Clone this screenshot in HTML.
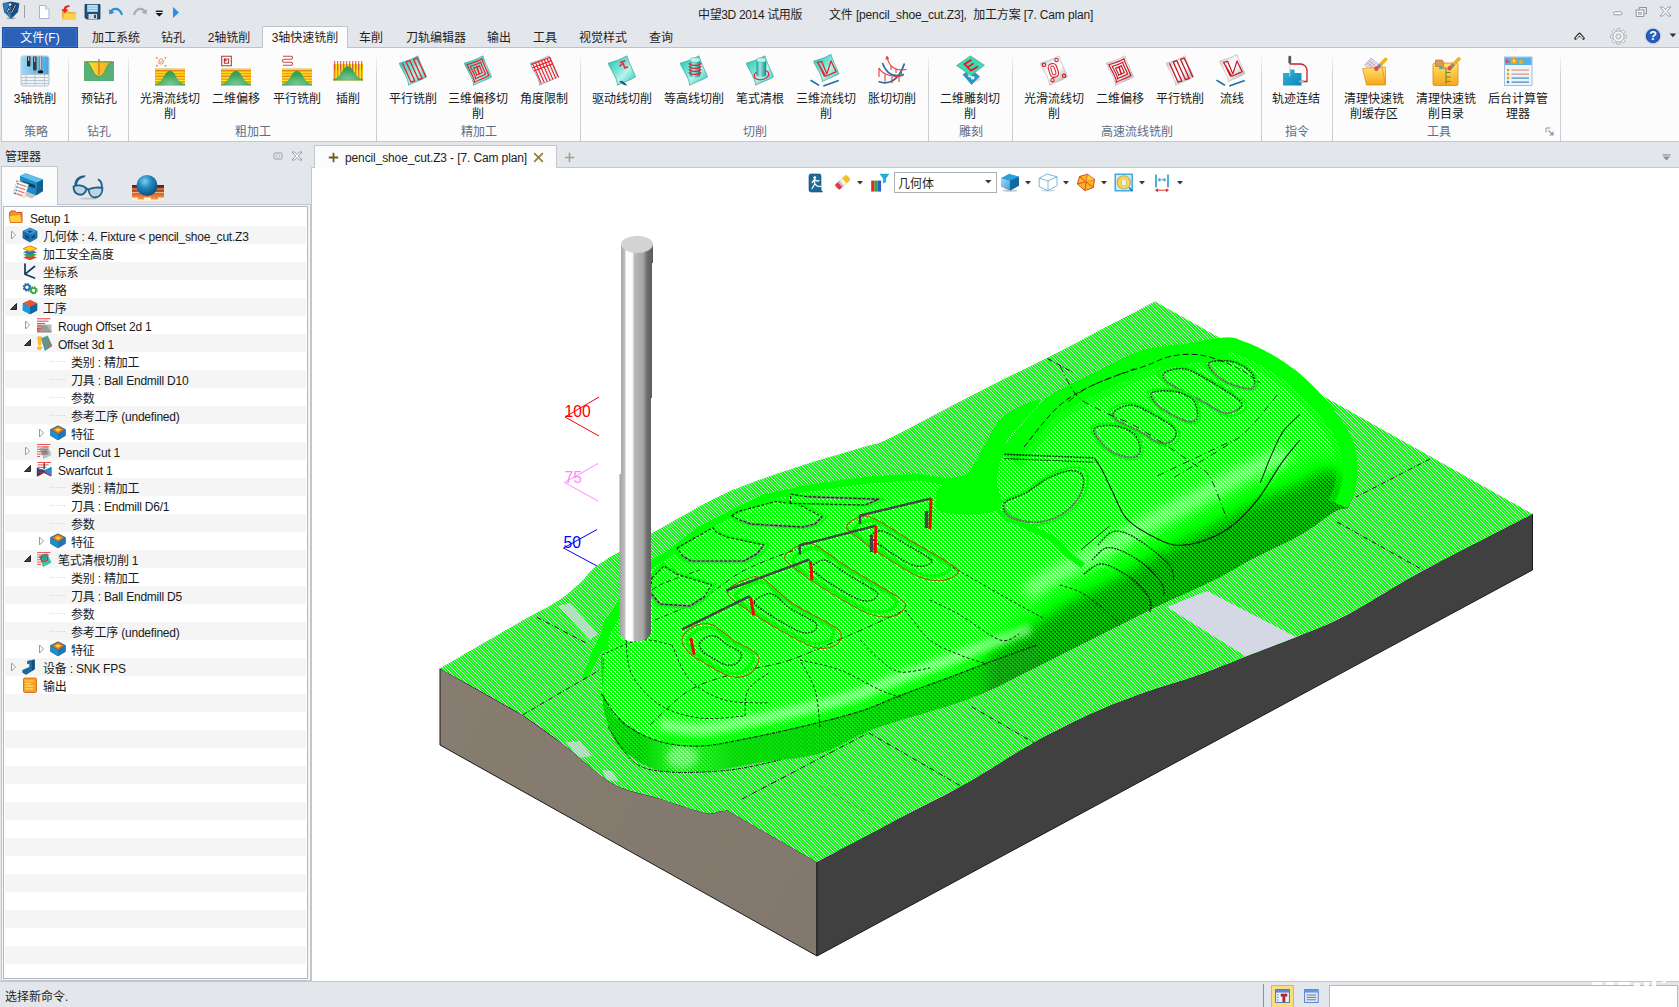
<!DOCTYPE html>
<html lang="zh-CN"><head><meta charset="utf-8"><title>中望3D 2014 试用版</title>
<style>
*{box-sizing:border-box;margin:0;padding:0}
html,body{width:1679px;height:1007px;overflow:hidden;background:#e3e6ea}
body{font-family:"Liberation Sans","Noto Sans CJK SC",sans-serif;font-size:12px;color:#1e1e1e;position:relative}
.a{position:absolute;white-space:nowrap}
.c{position:absolute;white-space:nowrap;text-align:center;transform:translateX(-50%)}
svg{position:absolute;overflow:visible}
.t{font-size:12px;line-height:16px;height:16px}
.lbl{font-size:12px;line-height:15px;color:#1a1a1a}
.grp{font-size:12px;line-height:15px;color:#5f6d84}
.sep{position:absolute;width:1px;top:54px;height:87px;background:linear-gradient(#fcfcfd,#cfd3d9 25%,#c9cdd4)}
.row{position:absolute;left:5px;width:301px;height:18px}
.row.alt{background:#f5f5f5}
.tx{position:absolute;white-space:nowrap;font-size:12px;line-height:18px;height:18px;color:#1a1a1a;margin-top:2px;letter-spacing:-.22px}
</style></head>
<body>
<div class="a" style="left:0;top:0;width:1679px;height:48px;background:#e3e6ea"></div>
<svg style="left:2px;top:1px" width="18" height="18" viewBox="0 0 18 18"><path d="M1 2.5 L9 1 L17 2.5 L15.5 11 L9 17.5 L2.5 11Z" fill="#2a7fc4" stroke="#1a4f86" stroke-width=".8"/><path d="M9 1 L17 2.5 L15.5 11 L9 17.5Z" fill="#174f8a"/><path d="M4 11.5 L6.5 6.5 L9.5 10.5 L13 3.5 L14.2 4.2 L10 12.5 L7 8.8 L5.2 12.2Z" fill="#fff" stroke="#111" stroke-width=".7"/><circle cx="8" cy="3.6" r="1.7" fill="#fff" stroke="#111" stroke-width=".6"/><ellipse cx="9" cy="17.3" rx="4.5" ry=".9" fill="#555" opacity=".45"/></svg>
<div class="a" style="left:24px;top:5px;width:1px;height:13px;background:#9aa0a8"></div>
<svg style="left:38px;top:4px" width="12" height="16" viewBox="0 0 12 16"><path d="M1.5 1.5 h6 l3.5 3.5 v9.5 h-9.5Z" fill="#fff" stroke="#a9b7c6" stroke-width="1"/><path d="M7.5 1.5 v3.5 h3.5" fill="#e8eef4" stroke="#a9b7c6" stroke-width=".8"/></svg>
<svg style="left:60px;top:4px" width="17" height="16" viewBox="0 0 17 16"><path d="M2.5 7 h5 l1.5 1.5 h6.5 v6.5 h-13Z" fill="#f7b21e" stroke="#e09410" stroke-width=".6"/><path d="M2.5 15 L4.5 9.5 h12 L15.5 15Z" fill="#ffd24a"/><path d="M9.5 1.2 C5.5 1 3.6 3 3.6 5.2 L1.2 5.2 L4.8 9 L8.4 5.2 L6 5.2 C6.2 3.8 7.4 2.8 9.5 3Z" fill="#e8241c"/></svg>
<svg style="left:84px;top:3px" width="17" height="17" viewBox="0 0 17 17"><path d="M1 1.5 h15 v14.5 h-13.5 l-1.5 -1.5Z" fill="#1d4f82" stroke="#12365c" stroke-width=".8"/><rect x="3.2" y="1.8" width="10.6" height="7" fill="#bfe1f6"/><rect x="3.2" y="3.6" width="10.6" height="1" fill="#8cc4e8"/><rect x="3.2" y="6" width="10.6" height="1" fill="#8cc4e8"/><rect x="4.5" y="11" width="8.5" height="5" fill="#d9d9d9"/><rect x="10" y="11.8" width="2" height="3.4" fill="#1d4f82"/></svg>
<svg style="left:108px;top:6px" width="16" height="11" viewBox="0 0 16 11"><path d="M2.5 6.2 C5 1.5 11 1.5 13.8 8.2" fill="none" stroke="#2f8fd0" stroke-width="2.2" stroke-linecap="round"/><path d="M.8 3.2 L1.6 8.6 L6.6 6.6Z" fill="#2f8fd0"/></svg>
<svg style="left:132px;top:6px" width="16" height="11" viewBox="0 0 16 11"><path d="M13.5 6.2 C11 1.5 5 1.5 2.2 8.2" fill="none" stroke="#a9adb3" stroke-width="2.2" stroke-linecap="round"/><path d="M15.2 3.2 L14.4 8.6 L9.4 6.6Z" fill="#a9adb3"/></svg>
<svg style="left:155px;top:10px" width="9" height="7" viewBox="0 0 9 7"><rect x=".8" y=".6" width="7" height="1.3" fill="#111"/><path d="M.6 3 h7.4 L4.3 6.6Z" fill="#111"/></svg>
<svg style="left:172px;top:6px" width="8" height="13" viewBox="0 0 8 13"><path d="M1 1 L7 6.5 L1 12Z" fill="#2f8fe6"/></svg>
<svg style="left:1613px;top:11px" width="10" height="5" viewBox="0 0 10 5"><rect x=".8" y=".8" width="8" height="3" rx="1" fill="#fff" stroke="#8d939b" stroke-width=".9"/></svg>
<svg style="left:1635px;top:6px" width="13" height="12" viewBox="0 0 13 12"><path d="M4.2 1.5 h7.3 v6.3 h-2.2 M4.2 1.5 v2.4" fill="none" stroke="#8d939b" stroke-width="1"/><rect x="1.2" y="4" width="7.6" height="6.4" fill="#fff" stroke="#8d939b" stroke-width="1"/><rect x="3.4" y="6.3" width="3.2" height="2" fill="#e3e6ea" stroke="#8d939b" stroke-width=".7"/></svg>
<svg style="left:1659px;top:6px" width="13" height="11" viewBox="0 0 13 11"><path d="M1 1 h2.8 l2.7 2.8 l2.7 -2.8 h2.8 l-4 4.4 l4 4.6 h-2.8 l-2.7 -3 l-2.7 3 h-2.8 l4 -4.6Z" fill="#fff" stroke="#8d939b" stroke-width=".9" stroke-linejoin="round"/></svg>
<svg style="left:1574px;top:31px" width="11" height="10" viewBox="0 0 11 10"><path d="M1.6 7.4 L5.5 3 L9.4 7.4" fill="none" stroke="#2a2a2a" stroke-width="2.8" stroke-linejoin="round" stroke-linecap="round"/><path d="M2.2 7.2 L5.5 3.6 L8.8 7.2" fill="none" stroke="#fff" stroke-width="1.2" stroke-linejoin="round" stroke-linecap="round"/></svg>
<svg style="left:1610px;top:28px" width="17" height="17" viewBox="0 0 17 17"><g transform="translate(8.5 8.5)"><rect x="-1.5" y="-8" width="3" height="3.2" rx=".6" fill="#f4f4f4" stroke="#9aa0a6" stroke-width=".7" transform="rotate(0)"/><rect x="-1.5" y="-8" width="3" height="3.2" rx=".6" fill="#f4f4f4" stroke="#9aa0a6" stroke-width=".7" transform="rotate(45)"/><rect x="-1.5" y="-8" width="3" height="3.2" rx=".6" fill="#f4f4f4" stroke="#9aa0a6" stroke-width=".7" transform="rotate(90)"/><rect x="-1.5" y="-8" width="3" height="3.2" rx=".6" fill="#f4f4f4" stroke="#9aa0a6" stroke-width=".7" transform="rotate(135)"/><rect x="-1.5" y="-8" width="3" height="3.2" rx=".6" fill="#f4f4f4" stroke="#9aa0a6" stroke-width=".7" transform="rotate(180)"/><rect x="-1.5" y="-8" width="3" height="3.2" rx=".6" fill="#f4f4f4" stroke="#9aa0a6" stroke-width=".7" transform="rotate(225)"/><rect x="-1.5" y="-8" width="3" height="3.2" rx=".6" fill="#f4f4f4" stroke="#9aa0a6" stroke-width=".7" transform="rotate(270)"/><rect x="-1.5" y="-8" width="3" height="3.2" rx=".6" fill="#f4f4f4" stroke="#9aa0a6" stroke-width=".7" transform="rotate(315)"/><circle r="5.6" fill="#f4f4f4" stroke="#9aa0a6" stroke-width=".8"/><circle r="2.6" fill="#e3e6ea" stroke="#9aa0a6" stroke-width=".8"/></g></svg>
<svg style="left:1644px;top:27px" width="18" height="18" viewBox="0 0 18 18"><circle cx="9" cy="9" r="7.8" fill="#2a5fc0" stroke="#c9d4e6" stroke-width="1.2"/><circle cx="9" cy="9" r="6.6" fill="none" stroke="#163f92" stroke-width=".6"/><text x="9" y="13.3" text-anchor="middle" font-family="Liberation Sans,sans-serif" font-weight="bold" font-size="12.5" fill="#fff">?</text></svg>
<svg style="left:1669px;top:33px" width="8" height="5" viewBox="0 0 8 5"><path d="M.6 .6 h6.6 L3.9 4.2Z" fill="#333"/></svg>
<div class="a t" style="left:698px;top:7px;letter-spacing:-.35px">中望3D 2014 试用版</div>
<div class="a t" style="left:829px;top:7px;letter-spacing:-.15px">文件 [pencil_shoe_cut.Z3],&nbsp; 加工方案 [7. Cam plan]</div>
<div class="a" style="left:1px;top:47px;width:1678px;height:95px;background:#fcfcfd;border-top:1px solid #bfc3c9;border-bottom:1px solid #c3c7cd;border-left:1px solid #c3c7cd"></div>
<div class="a" style="left:2px;top:27px;width:76px;height:21px;background:#2b61b7;border:1px solid #1c4ea5;box-shadow:inset 0 0 0 1px #3b72c9"></div>
<div class="c t" style="left:40px;top:30px;color:#fff">文件(F)</div>
<div class="a" style="left:262px;top:26px;width:86px;height:22px;background:#fcfcfd;border:1px solid #bfc3c9;border-bottom:none;border-radius:2px 2px 0 0"></div>
<div class="c t" style="left:116px;top:30px">加工系统</div>
<div class="c t" style="left:173px;top:30px">钻孔</div>
<div class="c t" style="left:229px;top:30px">2轴铣削</div>
<div class="c t" style="left:305px;top:30px">3轴快速铣削</div>
<div class="c t" style="left:371px;top:30px">车削</div>
<div class="c t" style="left:436px;top:30px">刀轨编辑器</div>
<div class="c t" style="left:499px;top:30px">输出</div>
<div class="c t" style="left:545px;top:30px">工具</div>
<div class="c t" style="left:603px;top:30px">视觉样式</div>
<div class="c t" style="left:661px;top:30px">查询</div>
<svg style="left:19px;top:55px" width="32" height="32" viewBox="0 0 32 32"><rect x="2" y="1" width="28" height="30" rx="2.5" fill="#eef3f6" stroke="#9fb4c2" stroke-width=".8"/><path d="M2.4 3.5 A2.5 2.5 0 0 1 4.5 1.4 L27.5 1.4 A2.5 2.5 0 0 1 29.6 3.5 L29.6 19 L2.4 19Z" fill="url(#gBlueTop)"/><rect x="2.4" y="19" width="27.2" height="1" fill="#b7c6cf"/><rect x="2.4" y="22" width="27.2" height="1" fill="#b7c6cf"/><rect x="2.4" y="25" width="27.2" height="1" fill="#b7c6cf"/><rect x="2.4" y="28" width="27.2" height="1" fill="#b7c6cf"/><rect x="6.5" y="19" width="1" height="11.5" fill="#b7c6cf"/><rect x="15.5" y="19" width="1" height="11.5" fill="#b7c6cf"/><rect x="25" y="19" width="1" height="11.5" fill="#b7c6cf"/><rect x="8" y="1.4" width="3.4" height="10" fill="#2b2b2b"/><rect x="9" y="2" width="1.2" height="4" fill="#bbb"/><path d="M14 1.4 h3.6 v12.5 a1.8 1.8 0 0 1 -3.6 0Z" fill="#3a3a3a"/><rect x="15" y="2" width="1.3" height="5" fill="#aaa"/><rect x="20.3" y="1.4" width="2.4" height="14" fill="#777"/><rect x="20.9" y="1.4" width="1" height="13" fill="#d5d5d5"/><ellipse cx="21.5" cy="16.8" rx="2.8" ry="1.5" fill="#111"/></svg>
<div class="c lbl" style="left:35px;top:92px">3轴铣削</div>
<svg style="left:83px;top:55px" width="32" height="32" viewBox="0 0 32 32"><rect x="1" y="6.5" width="30" height="19.5" fill="#57b074"/><rect x="1" y="6.5" width="30" height="1" fill="#7f9a50"/><path d="M3.5 7 C9 8.5 9.5 21.5 16 21.5 C22.5 21.5 23 8.5 28.5 7Z" fill="url(#gYellowV)" stroke="#3a9a55" stroke-width=".8"/><rect x="15.2" y="4" width="1.5" height="16" fill="#e07a30"/></svg>
<div class="c lbl" style="left:99px;top:92px">预钻孔</div>
<svg style="left:154px;top:55px" width="32" height="32" viewBox="0 0 32 32"><rect x="1" y="13.5" width="30" height="17" fill="#ffe818"/><rect x="1" y="15" width="30" height="1.5" fill="#e8841a"/><rect x="1" y="17.8" width="30" height="1.5" fill="#f0a020"/><rect x="1" y="20.6" width="30" height="1.5" fill="#e8841a"/><rect x="1" y="23.4" width="30" height="1.5" fill="#f0a020"/><rect x="1" y="26.2" width="30" height="1.5" fill="#e8841a"/><rect x="1" y="13.5" width="30" height="1" fill="#c9c2b0"/><path d="M1 30.5 L1 28.9 C9.4 28.7 10 15.7 16 15.7 C22 15.7 22.6 28.7 31 28.9 L31 30.5Z" fill="url(#gHillR)"/><path d="M7 6.5 m-2.6 0 a2.6 2.6 0 1 0 2.6 -2.6 a1.6 1.6 0 1 0 1.4 1.9" fill="none" stroke="#f08a5a" stroke-width="1"/><path d="M2 2.5 l1.6 .8 M12.2 2.5 l-1.6 .8 M2 11.2 l1.6 -.8 M12.2 11.2 l-1.6 -.8" stroke="#ee6a3a" stroke-width="1.3" fill="none"/></svg>
<div class="c lbl" style="left:170px;top:92px">光滑流线切</div>
<div class="c lbl" style="left:170px;top:107px">削</div>
<svg style="left:220px;top:55px" width="32" height="32" viewBox="0 0 32 32"><rect x="1" y="13.5" width="30" height="17" fill="#ffe818"/><rect x="1" y="15" width="30" height="1.5" fill="#e8841a"/><rect x="1" y="17.8" width="30" height="1.5" fill="#f0a020"/><rect x="1" y="20.6" width="30" height="1.5" fill="#e8841a"/><rect x="1" y="23.4" width="30" height="1.5" fill="#f0a020"/><rect x="1" y="26.2" width="30" height="1.5" fill="#e8841a"/><rect x="1" y="13.5" width="30" height="1" fill="#c9c2b0"/><path d="M1 30.5 L1 28.9 C9.4 28.7 10 15.7 16 15.7 C22 15.7 22.6 28.7 31 28.9 L31 30.5Z" fill="url(#gHillR)"/><path d="M1.7 1.2 h9.6 v9.6 h-9.6Z M4.4 4 h4.2 v4.2 h-4.2 z" fill="none" stroke="#b23a3a" stroke-width="1.1"/><path d="M4 3.8 l2.4 2.4" stroke="#8a1f1f" stroke-width="1.2"/></svg>
<div class="c lbl" style="left:236px;top:92px">二维偏移</div>
<svg style="left:281px;top:55px" width="32" height="32" viewBox="0 0 32 32"><rect x="1" y="13.5" width="30" height="17" fill="#ffe818"/><rect x="1" y="15" width="30" height="1.5" fill="#e8841a"/><rect x="1" y="17.8" width="30" height="1.5" fill="#f0a020"/><rect x="1" y="20.6" width="30" height="1.5" fill="#e8841a"/><rect x="1" y="23.4" width="30" height="1.5" fill="#f0a020"/><rect x="1" y="26.2" width="30" height="1.5" fill="#e8841a"/><rect x="1" y="13.5" width="30" height="1" fill="#c9c2b0"/><path d="M1 30.5 L1 28.9 C9.4 28.7 10 15.7 16 15.7 C22 15.7 22.6 28.7 31 28.9 L31 30.5Z" fill="url(#gHillR)"/><path d="M2 1.3 h8 a1.3 1.3 0 0 1 0 3 h-7 a1.3 1.3 0 0 0 0 3 h7 a1.3 1.3 0 0 1 0 3 h-8" fill="none" stroke="#c24e4e" stroke-width="1.1"/></svg>
<div class="c lbl" style="left:297px;top:92px">平行铣削</div>
<svg style="left:332px;top:55px" width="32" height="32" viewBox="0 0 32 32"><rect x="1" y="9" width="30" height="16.5" fill="#ffe818"/><rect x="2" y="9" width="1.4" height="16.5" fill="#e8841a"/><rect x="2.2" y="6" width="1" height="9.075" fill="#d05050"/><rect x="5" y="9" width="1.4" height="16.5" fill="#e8841a"/><rect x="5.2" y="6" width="1" height="9.075" fill="#d05050"/><rect x="8" y="9" width="1.4" height="16.5" fill="#e8841a"/><rect x="8.2" y="6" width="1" height="9.075" fill="#d05050"/><rect x="11" y="9" width="1.4" height="16.5" fill="#e8841a"/><rect x="11.2" y="6" width="1" height="9.075" fill="#d05050"/><rect x="14" y="9" width="1.4" height="16.5" fill="#e8841a"/><rect x="14.2" y="6" width="1" height="9.075" fill="#d05050"/><rect x="17" y="9" width="1.4" height="16.5" fill="#e8841a"/><rect x="17.2" y="6" width="1" height="9.075" fill="#d05050"/><rect x="20" y="9" width="1.4" height="16.5" fill="#e8841a"/><rect x="20.2" y="6" width="1" height="9.075" fill="#d05050"/><rect x="23" y="9" width="1.4" height="16.5" fill="#e8841a"/><rect x="23.2" y="6" width="1" height="9.075" fill="#d05050"/><rect x="26" y="9" width="1.4" height="16.5" fill="#e8841a"/><rect x="26.2" y="6" width="1" height="9.075" fill="#d05050"/><rect x="29" y="9" width="1.4" height="16.5" fill="#e8841a"/><rect x="29.2" y="6" width="1" height="9.075" fill="#d05050"/><path d="M1 25.5 L1 23.9 C9.4 23.7 10 11.2 16 11.2 C22 11.2 22.6 23.7 31 23.9 L31 25.5Z" fill="url(#gHillR)"/></svg>
<div class="c lbl" style="left:348px;top:92px">插削</div>
<svg style="left:397px;top:55px" width="32" height="32" viewBox="0 0 32 32"><path d="M2.3 8.2 C8 6.5 15 4.5 20.9 0.8 C22 6 27 15 29.5 21.8 C24 25.5 17 27 11.6 30.2 C11.5 23 4 14 2.3 8.2Z" fill="url(#gTeal)" stroke="#2ba596" stroke-width=".7"/><path d="M5.5 8.2 L14.1 27.2 L17.8 25.95 L9.2 6.95 L12.9 5.7 L21.5 24.7 L25.2 23.45 L16.6 4.45 L20.3 3.2 L28.9 22.2 " fill="none" stroke="#e8202a" stroke-width="1.3" stroke-linejoin="round"/></svg>
<div class="c lbl" style="left:413px;top:92px">平行铣削</div>
<svg style="left:462px;top:55px" width="32" height="32" viewBox="0 0 32 32"><path d="M2.3 8.2 C8 6.5 15 4.5 20.9 0.8 C22 6 27 15 29.5 21.8 C24 25.5 17 27 11.6 30.2 C11.5 23 4 14 2.3 8.2Z" fill="url(#gTeal)" stroke="#2ba596" stroke-width=".7"/><path d="M2.3 8.2 C8 6.5 15 4.5 20.9 0.8 C22 6 27 15 29.5 21.8 C24 25.5 17 27 11.6 30.2 C11.5 23 4 14 2.3 8.2Z" fill="none" stroke="#e8202a" stroke-width="1.2" transform="translate(16 15.5) scale(0.8) translate(-16 -15.5)" vector-effect="non-scaling-stroke"/><path d="M2.3 8.2 C8 6.5 15 4.5 20.9 0.8 C22 6 27 15 29.5 21.8 C24 25.5 17 27 11.6 30.2 C11.5 23 4 14 2.3 8.2Z" fill="none" stroke="#e8202a" stroke-width="1.2" transform="translate(16 15.5) scale(0.56) translate(-16 -15.5)" vector-effect="non-scaling-stroke"/><path d="M2.3 8.2 C8 6.5 15 4.5 20.9 0.8 C22 6 27 15 29.5 21.8 C24 25.5 17 27 11.6 30.2 C11.5 23 4 14 2.3 8.2Z" fill="none" stroke="#e8202a" stroke-width="1.2" transform="translate(16 15.5) scale(0.32) translate(-16 -15.5)" vector-effect="non-scaling-stroke"/><path d="M14.8 11.5 L17.4 19.5" stroke="#e8202a" stroke-width="1.6" fill="none"/></svg>
<div class="c lbl" style="left:478px;top:92px">三维偏移切</div>
<div class="c lbl" style="left:478px;top:107px">削</div>
<svg style="left:528px;top:55px" width="32" height="32" viewBox="0 0 32 32"><path d="M2.3 8.2 C8 6.5 15 4.5 20.9 0.8 C22 6 27 15 29.5 21.8 C24 25.5 17 27 11.6 30.2 C11.5 23 4 14 2.3 8.2Z" fill="#e9f2fa" stroke="#5f8fb8" stroke-width=".7"/><path d="M4.5 8.4 L13.4 28.6" stroke="#f01818" stroke-width="1.1" fill="none"/><path d="M7.4 7.4 L16.3 27.6" stroke="#f01818" stroke-width="1.1" fill="none"/><path d="M10.3 6.4 L19.2 26.6" stroke="#f01818" stroke-width="1.1" fill="none"/><path d="M13.2 5.4 L22.1 25.6" stroke="#f01818" stroke-width="1.1" fill="none"/><path d="M16.1 4.4 L25 24.6" stroke="#f01818" stroke-width="1.1" fill="none"/><path d="M19 3.4 L27.9 23.6" stroke="#f01818" stroke-width="1.1" fill="none"/><path d="M21.9 2.4 L30.8 22.6" stroke="#f01818" stroke-width="1.1" fill="none"/><path d="M3.2 9.5 L22.3 2.3" stroke="#f01818" stroke-width="1.1" fill="none"/><path d="M4.5 12.7 L23.6 5.5" stroke="#f01818" stroke-width="1.1" fill="none"/><path d="M5.8 15.9 L24.9 8.7" stroke="#f01818" stroke-width="1.1" fill="none"/></svg>
<div class="c lbl" style="left:544px;top:92px">角度限制</div>
<svg style="left:606px;top:55px" width="32" height="32" viewBox="0 0 32 32"><path d="M2.3 8.2 C8 6.5 15 4.5 20.9 0.8 C22 6 27 15 29.5 21.8 C24 25.5 17 27 11.6 30.2 C11.5 23 4 14 2.3 8.2Z" fill="url(#gTeal)" stroke="#2ba596" stroke-width=".7"/><path d="M14.5 7.5 l4.2 -1.6 M16.5 6.7 l2.4 6.2 l2.6 -1 M16.2 9 l-2.2 1.8" fill="none" stroke="#ee2b3a" stroke-width="1.6" stroke-linecap="round"/><path d="M13 26.5 l4.5 3.2 l3.5 1 l-1 -2 l-4 -3Z" fill="#1f5a86"/></svg>
<div class="c lbl" style="left:622px;top:92px">驱动线切削</div>
<svg style="left:678px;top:55px" width="32" height="32" viewBox="0 0 32 32"><path d="M2.3 8.2 C8 6.5 15 4.5 20.9 0.8 C22 6 27 15 29.5 21.8 C24 25.5 17 27 11.6 30.2 C11.5 23 4 14 2.3 8.2Z" fill="url(#gTeal)" stroke="#2ba596" stroke-width=".7"/><path d="M11.8 5 L11.8 20 A5.2 2.4 0 0 0 22.2 20 L22.2 5Z" fill="url(#gCylT)"/><ellipse cx="17" cy="5" rx="5.2" ry="2.4" fill="#bff2ec" stroke="#2aa9a0" stroke-width=".5"/><path d="M11.2 8 A5.8 2.4 0 0 0 22.8 8" fill="none" stroke="#e8202a" stroke-width="1.3"/><path d="M11.2 11 A5.8 2.4 0 0 0 22.8 11" fill="none" stroke="#e8202a" stroke-width="1.3"/><path d="M11.2 14 A5.8 2.4 0 0 0 22.8 14" fill="none" stroke="#e8202a" stroke-width="1.3"/><path d="M11.2 17 A5.8 2.4 0 0 0 22.8 17" fill="none" stroke="#e8202a" stroke-width="1.3"/></svg>
<div class="c lbl" style="left:694px;top:92px">等高线切削</div>
<svg style="left:744px;top:55px" width="32" height="32" viewBox="0 0 32 32"><path d="M2.3 8.2 C8 6.5 15 4.5 20.9 0.8 C22 6 27 15 29.5 21.8 C24 25.5 17 27 11.6 30.2 C11.5 23 4 14 2.3 8.2Z" fill="url(#gTeal)" stroke="#2ba596" stroke-width=".7"/><ellipse cx="17.5" cy="20" rx="7.4" ry="4.6" fill="none" stroke="#e8202a" stroke-width="1.2" transform="rotate(-12 17.5 20)"/><path d="M12.5 5 L12.5 19.5 A4.8 2.3 0 0 0 22.1 19.5 L22.1 5Z" fill="url(#gCylT)"/><ellipse cx="17.3" cy="5" rx="4.8" ry="2.3" fill="#bff2ec" stroke="#2aa9a0" stroke-width=".5"/></svg>
<div class="c lbl" style="left:760px;top:92px">笔式清根</div>
<svg style="left:810px;top:55px" width="32" height="32" viewBox="0 0 32 32"><path d="M1 24.5 L9.5 29.8 L8.5 31 L0 25.8Z" fill="#1d6e9c"/><path d="M13 30.2 L28.5 24.8 L29 26.3 L13.6 31.8Z" fill="#1d6e9c"/><g transform="translate(1.5 -1.5) scale(.93)"><path d="M2.3 8.2 C8 6.5 15 4.5 20.9 0.8 C22 6 27 15 29.5 21.8 C24 25.5 17 27 11.6 30.2 C11.5 23 4 14 2.3 8.2Z" fill="url(#gTeal)" stroke="#2ba596" stroke-width=".7"/><path d="M6.5 9.5 L11 8.5 L16.5 22 L21 8 L26.5 19.5 L15.5 24.5Z M8 12 L14 25" fill="none" stroke="#e8202a" stroke-width="1.3" stroke-linejoin="round"/></g></svg>
<div class="c lbl" style="left:826px;top:92px">三维流线切</div>
<div class="c lbl" style="left:826px;top:107px">削</div>
<svg style="left:876px;top:55px" width="32" height="32" viewBox="0 0 32 32"><path d="M6.5 8 C10 18 17 23 28 19.5" fill="none" stroke="#2c6e9e" stroke-width="1.6"/><path d="M2.5 26.5 C12 30 22 27 28.5 8.5" fill="none" stroke="#2c6e9e" stroke-width="1.8"/><path d="M11 1.5 C12.5 12 20 16.5 30.5 14.5" fill="none" stroke="#e43a3a" stroke-width="1.1"/><path d="M3 13 C7 20 17 23 27 20.5" fill="none" stroke="#e43a3a" stroke-width="1.1"/><path d="M3 13 v9 M9 19.5 v7 M16 21.8 v6.5 M23 21 v6 M11 1.5 l-1.2 3 M11 1.5 l1.6 2.6 M15 11 v4 M20 14 v4 M25.5 15 v4" fill="none" stroke="#e43a3a" stroke-width="1.1"/></svg>
<div class="c lbl" style="left:892px;top:92px">胀切切削</div>
<svg style="left:954px;top:55px" width="32" height="32" viewBox="0 0 32 32"><path d="M9 19.5 L17 14.5 L25.5 21.5 L17.5 29.5Z" fill="#2496c8" stroke="#1a78a6" stroke-width=".6"/><path d="M14 19 l6 5 M14.6 21.8 l3 -2.4 M17.4 24 l3 -2.4" stroke="#e8f6fc" stroke-width="1.7" fill="none"/><path d="M19.5 28.5 L26.5 24.8 L25.5 21.5Z" fill="#d8d8d8"/><path d="M2.5 10.5 L16.5 0.8 L30.5 10.2 L16.8 20.8Z" fill="#3ed8b6" stroke="#6aa58c" stroke-width=".7"/><path d="M17.5 4.8 L10.5 9.2 L17 15.6 L24 11.6 M13.6 12.2 L19.6 8.4" fill="none" stroke="#f0141e" stroke-width="1.7"/></svg>
<div class="c lbl" style="left:970px;top:92px">二维雕刻切</div>
<div class="c lbl" style="left:970px;top:107px">削</div>
<svg style="left:1038px;top:55px" width="32" height="32" viewBox="0 0 32 32"><path d="M2.3 8.2 C8 6.5 15 4.5 20.9 0.8 C22 6 27 15 29.5 21.8 C24 25.5 17 27 11.6 30.2 C11.5 23 4 14 2.3 8.2Z" fill="url(#gSilver)" stroke="#b5b5b5" stroke-width=".7"/><rect x="11" y="8.5" width="8.5" height="14" rx="4" fill="none" stroke="#d8202c" stroke-width="1.1" transform="rotate(-18 15 15)"/><rect x="13.4" y="11" width="3.6" height="9" rx="1.8" fill="none" stroke="#d8202c" stroke-width="1" transform="rotate(-18 15 15)"/><circle cx="6" cy="9.8" r="1.7" fill="none" stroke="#d8202c" stroke-width="1.1"/><circle cx="18.5" cy="5" r="1.7" fill="none" stroke="#d8202c" stroke-width="1.1"/><circle cx="26" cy="20.8" r="1.7" fill="none" stroke="#d8202c" stroke-width="1.1"/><circle cx="14.5" cy="25.2" r="1.7" fill="none" stroke="#d8202c" stroke-width="1.1"/></svg>
<div class="c lbl" style="left:1054px;top:92px">光滑流线切</div>
<div class="c lbl" style="left:1054px;top:107px">削</div>
<svg style="left:1104px;top:55px" width="32" height="32" viewBox="0 0 32 32"><path d="M2.3 8.2 C8 6.5 15 4.5 20.9 0.8 C22 6 27 15 29.5 21.8 C24 25.5 17 27 11.6 30.2 C11.5 23 4 14 2.3 8.2Z" fill="url(#gSilver)" stroke="#b5b5b5" stroke-width=".7"/><path d="M2.3 8.2 C8 6.5 15 4.5 20.9 0.8 C22 6 27 15 29.5 21.8 C24 25.5 17 27 11.6 30.2 C11.5 23 4 14 2.3 8.2Z" fill="none" stroke="#c81a26" stroke-width="1.2" transform="translate(16 15.5) scale(0.8) translate(-16 -15.5)" vector-effect="non-scaling-stroke"/><path d="M2.3 8.2 C8 6.5 15 4.5 20.9 0.8 C22 6 27 15 29.5 21.8 C24 25.5 17 27 11.6 30.2 C11.5 23 4 14 2.3 8.2Z" fill="none" stroke="#c81a26" stroke-width="1.2" transform="translate(16 15.5) scale(0.56) translate(-16 -15.5)" vector-effect="non-scaling-stroke"/><path d="M2.3 8.2 C8 6.5 15 4.5 20.9 0.8 C22 6 27 15 29.5 21.8 C24 25.5 17 27 11.6 30.2 C11.5 23 4 14 2.3 8.2Z" fill="none" stroke="#c81a26" stroke-width="1.2" transform="translate(16 15.5) scale(0.32) translate(-16 -15.5)" vector-effect="non-scaling-stroke"/><path d="M14.8 11.5 L17.4 19.5" stroke="#c81a26" stroke-width="1.6" fill="none"/></svg>
<div class="c lbl" style="left:1120px;top:92px">二维偏移</div>
<svg style="left:1164px;top:55px" width="32" height="32" viewBox="0 0 32 32"><path d="M2.3 8.2 C8 6.5 15 4.5 20.9 0.8 C22 6 27 15 29.5 21.8 C24 25.5 17 27 11.6 30.2 C11.5 23 4 14 2.3 8.2Z" fill="url(#gSilver)" stroke="#b5b5b5" stroke-width=".7"/><path d="M5.5 8.2 L14.1 27.2 L17.8 25.95 L9.2 6.95 L12.9 5.7 L21.5 24.7 L25.2 23.45 L16.6 4.45 L20.3 3.2 L28.9 22.2 " fill="none" stroke="#c01824" stroke-width="1.3" stroke-linejoin="round"/></svg>
<div class="c lbl" style="left:1180px;top:92px">平行铣削</div>
<svg style="left:1216px;top:55px" width="32" height="32" viewBox="0 0 32 32"><path d="M1 24.5 L9.5 29.8 L8.5 31 L0 25.8Z" fill="#1d6e9c"/><path d="M13 30.2 L28.5 24.8 L29 26.3 L13.6 31.8Z" fill="#1d6e9c"/><g transform="translate(1.5 -1.5) scale(.93)"><path d="M2.3 8.2 C8 6.5 15 4.5 20.9 0.8 C22 6 27 15 29.5 21.8 C24 25.5 17 27 11.6 30.2 C11.5 23 4 14 2.3 8.2Z" fill="url(#gSilver)" stroke="#b5b5b5" stroke-width=".7"/><path d="M6.5 9.5 L11 8.5 L16.5 22 L21 8 L26.5 19.5 L15.5 24.5Z M8 12 L14 25" fill="none" stroke="#c81a26" stroke-width="1.3" stroke-linejoin="round"/></g></svg>
<div class="c lbl" style="left:1232px;top:92px">流线</div>
<svg style="left:1280px;top:55px" width="32" height="32" viewBox="0 0 32 32"><path d="M3 18 h7 v-3.5 h4.5 v3.5 h7 v12.5 h-18.5Z" fill="url(#gBlueBox)"/><path d="M9.5 9 h11 a6.5 6.5 0 0 1 6.5 6.5 v11 h-5" fill="none" stroke="#c21f2a" stroke-width="1.3"/><rect x="8.7" y="1" width="2.2" height="7.5" rx=".8" fill="#555" stroke="#333" stroke-width=".4"/><rect x="9.3" y="8.5" width="1" height="13" fill="#d0d0d0"/><rect x="19" y="25.5" width="5" height="1.8" rx=".8" fill="#bbb" stroke="#888" stroke-width=".3"/></svg>
<div class="c lbl" style="left:1296px;top:92px">轨迹连结</div>
<svg style="left:1358px;top:55px" width="32" height="32" viewBox="0 0 32 32"><path d="M6.5 10 L13 3 L21 9.5 L14.5 17Z" fill="#dfe6f2" stroke="#8fa4c4" stroke-width=".6"/><path d="M8.5 10 l5 -5.4 M10.5 11.6 l5 -5.4 M12.5 13.2 l5 -5.4 M9.2 7.8 l7.2 5.8 M11 5.8 l7.2 5.8" stroke="#e58a98" stroke-width=".7" fill="none"/><path d="M4.5 13.5 L24 12 L27.5 12 L27.5 30 L8.5 30Z" fill="url(#gFold)" stroke="#e08a12" stroke-width=".7"/><path d="M24 12 L27.5 30" stroke="#e08a12" stroke-width=".7"/><path d="M18.2 11.5 l3.2 -3.3 l2.6 2.5 l-3.2 3.3Z" fill="#8a8a8a"/><path d="M21.4 8.2 L26.5 3 A1.8 1.8 0 0 1 29 5.6 L24 10.7Z" fill="#f6b21a"/><circle cx="18.3" cy="13.8" r="2.2" fill="#e8465a"/></svg>
<div class="c lbl" style="left:1374px;top:92px">清理快速铣</div>
<div class="c lbl" style="left:1374px;top:107px">削缓存区</div>
<svg style="left:1430px;top:55px" width="32" height="32" viewBox="0 0 32 32"><rect x="3" y="8" width="25" height="22.5" rx="1.5" fill="url(#gFold)" stroke="#d9860f" stroke-width=".8"/><path d="M5.5 5 h6.5 l1.5 2 v4.5 h-8Z" fill="#d99a55" stroke="#a86a2a" stroke-width=".6"/><path d="M16 13 v16 M16 17.5 h4.5 M16 22 h4.5 M16 26.5 h4.5 M11 13 h5" fill="none" stroke="#6f8a2a" stroke-width="1.1"/><rect x="9.2" y="11.8" width="3" height="2.4" fill="#46a6d8"/><path d="M19.4 11 l3.2 -3.3 l2.6 2.5 l-3.2 3.3Z" fill="#8a8a8a"/><path d="M22.6 7.7 L27.6 2.6 A1.8 1.8 0 0 1 30.2 5.2 L25.2 10.2Z" fill="#f6b21a"/><circle cx="19.6" cy="13.2" r="2.2" fill="#e8465a"/></svg>
<div class="c lbl" style="left:1446px;top:92px">清理快速铣</div>
<div class="c lbl" style="left:1446px;top:107px">削目录</div>
<svg style="left:1502px;top:55px" width="32" height="32" viewBox="0 0 32 32"><rect x="2.5" y="2" width="27.5" height="28.5" fill="#eef4fb" stroke="#8db2d8" stroke-width=".8"/><rect x="2.9" y="2.4" width="26.7" height="7.6" fill="#58b0e6"/><circle cx="12" cy="6" r="3.3" fill="#f2a21a"/><circle cx="12" cy="6" r="1.2" fill="#ffe27a"/><circle cx="19" cy="7" r="2.1" fill="#f2b21a"/><path d="M3.5 4 l5 3 l-4.5 1z" fill="#e8465a"/><rect x="9.5" y="14.5" width="17.5" height="1.2" fill="#e0907a"/><circle cx="6" cy="15.1" r="1.4" fill="#f2a21a"/><rect x="9.5" y="18.5" width="17.5" height="1.2" fill="#e0907a"/><circle cx="6" cy="19.1" r="1.4" fill="#f2a21a"/><rect x="9.5" y="22.5" width="17.5" height="1.2" fill="#3a8ac0"/><circle cx="6" cy="23.1" r="1.4" fill="#f2a21a"/><rect x="9.5" y="26.5" width="17.5" height="1.2" fill="#3a8ac0"/><circle cx="6" cy="27.1" r="1.4" fill="#3a8ac0"/></svg>
<div class="c lbl" style="left:1518px;top:92px">后台计算管</div>
<div class="c lbl" style="left:1518px;top:107px">理器</div>
<div class="c grp" style="left:36px;top:125px">策略</div>
<div class="c grp" style="left:99px;top:125px">钻孔</div>
<div class="c grp" style="left:253px;top:125px">粗加工</div>
<div class="c grp" style="left:479px;top:125px">精加工</div>
<div class="c grp" style="left:755px;top:125px">切削</div>
<div class="c grp" style="left:971px;top:125px">雕刻</div>
<div class="c grp" style="left:1137px;top:125px">高速流线铣削</div>
<div class="c grp" style="left:1297px;top:125px">指令</div>
<div class="c grp" style="left:1439px;top:125px">工具</div>
<div class="sep" style="left:68px"></div>
<div class="sep" style="left:128px"></div>
<div class="sep" style="left:376px"></div>
<div class="sep" style="left:580px"></div>
<div class="sep" style="left:928px"></div>
<div class="sep" style="left:1012px"></div>
<div class="sep" style="left:1261px"></div>
<div class="sep" style="left:1332px"></div>
<div class="sep" style="left:1560px"></div>
<svg width="0" height="0" style="left:0;top:0"><defs>
<linearGradient id="gHill" x1="0" y1="0" x2="0" y2="1"><stop offset="0" stop-color="#35a04f"/><stop offset="1" stop-color="#5dba7a"/></linearGradient>
<radialGradient id="gHillR" cx=".5" cy=".85" r=".6"><stop offset="0" stop-color="#76c795"/><stop offset="1" stop-color="#37a252"/></radialGradient>
<linearGradient id="gTeal" x1="0" y1="0" x2="1" y2="1"><stop offset="0" stop-color="#19c2ad"/><stop offset=".45" stop-color="#7fe6d8"/><stop offset=".6" stop-color="#b6f2ea"/><stop offset="1" stop-color="#25c4b0"/></linearGradient>
<linearGradient id="gTeal2" x1="0" y1="0" x2="1" y2="1"><stop offset="0" stop-color="#2fbfa9"/><stop offset=".5" stop-color="#62d4c2"/><stop offset="1" stop-color="#2fbfa9"/></linearGradient>
<linearGradient id="gSilver" x1="0" y1="0" x2="1" y2="1"><stop offset="0" stop-color="#bfbfbf"/><stop offset=".35" stop-color="#f4f4f4"/><stop offset=".55" stop-color="#fff"/><stop offset=".8" stop-color="#c4c4c4"/><stop offset="1" stop-color="#e2e2e2"/></linearGradient>
<linearGradient id="gBlueTop" x1="0" y1="0" x2="1" y2="0"><stop offset="0" stop-color="#9ed6f5"/><stop offset="1" stop-color="#4da6dc"/></linearGradient>
<linearGradient id="gFold" x1="0" y1="0" x2="0" y2="1"><stop offset="0" stop-color="#ffe36a"/><stop offset="1" stop-color="#f7a51c"/></linearGradient>
<linearGradient id="gCylT" x1="0" y1="0" x2="1" y2="0"><stop offset="0" stop-color="#1a9c94"/><stop offset=".35" stop-color="#9fe8e0"/><stop offset="1" stop-color="#138a86"/></linearGradient>
<linearGradient id="gBlueBox" x1="0" y1="0" x2="1" y2="1"><stop offset="0" stop-color="#35b4e0"/><stop offset="1" stop-color="#0d86b8"/></linearGradient>
<linearGradient id="gYellowV" x1="0" y1="0" x2="1" y2="0"><stop offset="0" stop-color="#ffe52a"/><stop offset="1" stop-color="#f6a623"/></linearGradient>
</defs></svg><svg style="left:1545px;top:127px" width="9" height="9" viewBox="0 0 9 9"><path d="M1 5.5 V1 H5.5" fill="none" stroke="#8a929c" stroke-width="1"/><path d="M3.5 3.5 L7.5 7.5 M8 4.5 V8 H4.5" fill="none" stroke="#8a929c" stroke-width="1.1"/></svg>
<div class="a t" style="left:5px;top:149px;">管理器</div>
<svg style="left:273px;top:152px" width="10" height="8" viewBox="0 0 10 8"><rect x="1" y="1" width="8" height="6" rx="1" fill="#f4f5f7" stroke="#8d939b" stroke-width=".9"/><rect x="3" y="3" width="4" height="2" fill="#fff" stroke="#8d939b" stroke-width=".6"/></svg><svg style="left:291px;top:151px" width="12" height="10" viewBox="0 0 12 10"><path d="M1 1 h2.6 l2.4 2.5 l2.4 -2.5 h2.6 l-3.7 4 l3.7 4 h-2.6 l-2.4 -2.5 l-2.4 2.5 h-2.6 l3.7 -4Z" fill="#fff" stroke="#8d939b" stroke-width=".9" stroke-linejoin="round"/></svg>
<div class="a" style="left:1px;top:166px;width:57px;height:38px;background:#fcfcfd;border:1px solid #c3c7cd;border-bottom:none"></div>
<div class="a" style="left:1px;top:204px;width:310px;height:777px;border:1px solid #c3c7cd;background:#f4f5f7"></div>
<div class="a" style="left:2px;top:203px;width:55px;height:3px;background:#f8f9fa"></div>
<div class="a" style="left:3px;top:206px;width:305px;height:773px;border:1px solid #b4bac3;background:#fff"></div>
<svg style="left:12px;top:172px" width="33" height="28" viewBox="0 0 33 28"><path d="M8 4 L13.5 1.2 L31 7.5 L31 19 L24 23.5 L8 17Z" fill="#1f8ac4"/><path d="M8 4 L13.5 1.2 L31 7.5 L25 10.5Z" fill="#5ec0ea"/><path d="M25 10.5 L31 7.5 L31 19 L24 23.5Z" fill="#12608f"/><path d="M10.5 9 L23 13 L23 16.2 L10.5 12.2Z" fill="#0d3f66"/><path d="M11 18.5 L24 23.5 L20 26.5 L7 21.5Z" fill="#8a8a8a" opacity=".5"/><path d="M5 8.5 L16.5 12.5 L12.8 25.6 L1.2 21.4Z" fill="#fbfbfb" stroke="#b9b9b9" stroke-width=".6"/><path d="M7.3 12.2 l7 2.4 M6.4 15.4 l7 2.4 M5.5 18.6 l7 2.4 M4.6 21.6 l6 2" stroke="#e86a5a" stroke-width="1.1" fill="none"/><path d="M5.3 11.5 l1.4 .5 M4.4 14.7 l1.4 .5 M3.5 17.9 l1.4 .5 M2.6 21 l1.4 .5" stroke="#2a78c0" stroke-width="1.6" fill="none"/><path d="M4.6 8 l2 1.6 l-2.4 .6Z" fill="#f0822a"/></svg>
<svg style="left:71px;top:174px" width="34" height="26" viewBox="0 0 34 26"><path d="M3.5 12 C3 6.5 6.5 2 12.5 1.6 l2 -.4 l-1 2.2 C8.5 4 6 7.5 6 11.5" fill="#1f5f8a"/><path d="M27.5 4.5 C30.5 6 32.5 9.5 31.6 14 L29.8 13.4 C30.4 10 29 7.5 26.5 6Z" fill="#1f5f8a"/><path d="M2.5 12.5 C6 10.5 12 11 15.5 14.5 C14.8 19 12 21.5 8 20.5 C4.5 19.8 2.5 16.5 2.5 12.5Z" fill="#bcd4e4" stroke="#1f5f8a" stroke-width="1.8"/><path d="M17.5 15.5 C21 13.5 27.5 13 31.5 14 C31.5 19 29 23 24.5 23.5 C20.5 23.8 18 20 17.5 15.5Z" fill="#bcd4e4" stroke="#1f5f8a" stroke-width="1.8"/><path d="M15.2 14.6 L17.6 15.6" stroke="#1f5f8a" stroke-width="2"/><ellipse cx="18" cy="24.6" rx="9" ry="1" fill="#888" opacity=".35"/></svg>
<svg style="left:131px;top:174px" width="34" height="29" viewBox="0 0 34 29"><defs><radialGradient id="gSph" cx=".4" cy=".3" r=".7"><stop offset="0" stop-color="#7fd0f0"/><stop offset=".45" stop-color="#1f8ac0"/><stop offset="1" stop-color="#0d4f7a"/></radialGradient><linearGradient id="gFloor" x1="0" y1="0" x2="0" y2="1"><stop offset="0" stop-color="#5a1a0a"/><stop offset=".5" stop-color="#d8622a"/><stop offset="1" stop-color="#ffb05a"/></linearGradient></defs><rect x="1" y="11" width="32" height="16.5" fill="url(#gFloor)"/><path d="M1 15 h32 M1 18.5 h32" stroke="#f8e0d0" stroke-width=".9" opacity=".7"/><path d="M1 23.5 h6 v2 h6 v-2 h7 v2 h7 v-2 h6 v4 h-32Z" fill="#fff4e4" opacity=".9"/><circle cx="16" cy="11.5" r="10.5" fill="url(#gSph)"/></svg>
<div class="row alt" style="top:226px;height:18px"></div>
<div class="row alt" style="top:262px;height:18px"></div>
<div class="row alt" style="top:298px;height:18px"></div>
<div class="row alt" style="top:334px;height:18px"></div>
<div class="row alt" style="top:370px;height:18px"></div>
<div class="row alt" style="top:406px;height:18px"></div>
<div class="row alt" style="top:442px;height:18px"></div>
<div class="row alt" style="top:478px;height:18px"></div>
<div class="row alt" style="top:514px;height:18px"></div>
<div class="row alt" style="top:550px;height:18px"></div>
<div class="row alt" style="top:586px;height:18px"></div>
<div class="row alt" style="top:622px;height:18px"></div>
<div class="row alt" style="top:658px;height:18px"></div>
<div class="row alt" style="top:694px;height:18px"></div>
<div class="row alt" style="top:730px;height:18px"></div>
<div class="row alt" style="top:766px;height:18px"></div>
<div class="row alt" style="top:802px;height:18px"></div>
<div class="row alt" style="top:838px;height:18px"></div>
<div class="row alt" style="top:874px;height:18px"></div>
<div class="row alt" style="top:910px;height:18px"></div>
<div class="row alt" style="top:946px;height:18px"></div>
<svg style="left:8px;top:209px" width="16" height="16" viewBox="0 0 16 16"><path d="M1.5 4 L3 2 L7 2 L8.5 3.5 L14 3.5 L14 13.5 L2.5 13.5Z" fill="#f59a1a" stroke="#d8381a" stroke-width=".9"/><path d="M1 6.5 L12.5 5.5 L14 13.5 L2.5 13.5Z" fill="#ffd23c" stroke="#e0661a" stroke-width=".6"/></svg>
<div class="tx" style="left:30px;top:208px">Setup 1</div>
<svg style="left:10px;top:230px" width="8" height="10" viewBox="0 0 8 10"><path d="M1.5 1 L5.5 5 L1.5 9 Z" fill="#fff" stroke="#9a9a9a" stroke-width="1"/></svg>
<svg style="left:22px;top:227px" width="16" height="16" viewBox="0 0 16 16"><path d="M8 1 L15 4.2 L15 11 L8 15 L1 11 L1 4.2Z" fill="#1f7ab8" stroke="#0f4f80" stroke-width=".7"/><path d="M8 1 L15 4.2 L8 7.6 L1 4.2Z" fill="#3a9ad6"/><path d="M5.2 4.6 L8 3.4 L10.8 4.6 L8 5.9Z" fill="#0f4f80"/><path d="M8 7.6 L8 15 L1 11 L1 4.2Z" fill="#176aa4"/><path d="M3.5 8 l3 1.6 v2.6 l-3 -1.6Z" fill="#0d4674"/><path d="M9.5 9.5 l3.4 -1.8 v2.6 l-3.4 1.8Z" fill="#0d4674"/></svg>
<div class="tx" style="left:43px;top:226px">几何体 : 4. Fixture &lt; pencil_shoe_cut.Z3</div>
<svg style="left:22px;top:245px" width="16" height="16" viewBox="0 0 16 16"><path d="M8 9.8 L15 12.4 L8 15.3 L1 12.4Z" fill="#e8402a"/><path d="M8 7.2 L15 9.8 L8 12.6 L1 9.8Z" fill="#3aa83a"/><path d="M8 4.6 L15 7.2 L8 10 L1 7.2Z" fill="#2a78c0"/><path d="M8 .8 L15 3.6 L8 6.6 L1 3.6Z" fill="#ffd21e" stroke="#e8781a" stroke-width=".9"/></svg>
<div class="tx" style="left:43px;top:244px">加工安全高度</div>
<svg style="left:22px;top:263px" width="16" height="16" viewBox="0 0 16 16"><path d="M3 1 V11.2 L12.5 15 M3 11.2 L12.5 3.5" fill="none" stroke="#14365c" stroke-width="1.7" stroke-linecap="round" stroke-linejoin="round"/></svg>
<div class="tx" style="left:43px;top:262px">坐标系</div>
<svg style="left:22px;top:281px" width="16" height="16" viewBox="0 0 16 16"><g transform="translate(5 6.3)"><circle r="3.2" fill="none" stroke="#1d6fae" stroke-width="2.2" stroke-dasharray="1.5 1.02"/><circle r="2.6" fill="none" stroke="#1d6fae" stroke-width="1.6"/></g><g transform="translate(11.6 9.4)"><circle r="3" fill="none" stroke="#3aa83a" stroke-width="2.2" stroke-dasharray="1.4 .96"/><circle r="2.4" fill="none" stroke="#3aa83a" stroke-width="1.5"/></g></svg>
<div class="tx" style="left:43px;top:280px">策略</div>
<svg style="left:10px;top:303px" width="8" height="8" viewBox="0 0 8 8"><path d="M6.5 0.5 L6.5 6.5 L0.5 6.5 Z" fill="#404040" stroke="#262626" stroke-width="1"/></svg>
<svg style="left:22px;top:299px" width="16" height="16" viewBox="0 0 16 16"><path d="M8 1 L15.2 4.3 L15.2 11.4 L8 15.2 L.8 11.4 L.8 4.3Z" fill="#1e8acc"/><path d="M8 7.8 L8 15.2 L.8 11.4 L.8 4.3Z" fill="#1a9ade"/><path d="M8 7.8 L15.2 4.3 L15.2 11.4 L8 15.2Z" fill="#12669e"/><path d="M8 1 L15.2 4.3 L8 7.8 L.8 4.3Z" fill="#f4522a"/></svg>
<div class="tx" style="left:43px;top:298px">工序</div>
<svg style="left:24px;top:320px" width="8" height="10" viewBox="0 0 8 10"><path d="M1.5 1 L5.5 5 L1.5 9 Z" fill="#fff" stroke="#9a9a9a" stroke-width="1"/></svg>
<svg style="left:36px;top:317px" width="16" height="16" viewBox="0 0 16 16"><rect x="1" y="7.5" width="14.5" height="8" fill="#b8b8b8"/><path d="M1 15.5 V12 C6 12 5.5 8 9 8 C12.5 8 12 13.5 15.5 13.8 V15.5Z" fill="#9a9a9a"/><path d="M1 1.8 h13.5 M1 4.2 h11.5 M1 6.6 h8 M1 9 h5.5 M1 11.4 h4 M1 13.8 h2.5" stroke="#ea3a3a" stroke-width="1" fill="none"/></svg>
<div class="tx" style="left:58px;top:316px">Rough Offset 2d 1</div>
<svg style="left:24px;top:339px" width="8" height="8" viewBox="0 0 8 8"><path d="M6.5 0.5 L6.5 6.5 L0.5 6.5 Z" fill="#404040" stroke="#262626" stroke-width="1"/></svg>
<svg style="left:36px;top:335px" width="16" height="16" viewBox="0 0 16 16"><path d="M5.5 3.5 L11.5 1 L16 11 L9 15.5Z" fill="#3aa89a" stroke="#2a7a70" stroke-width=".5"/><path d="M6.8 5 l7 8 M8.5 3.8 l6.3 8 M6.5 8 l5.5 6 M10.5 2.6 l5 8" stroke="#e85a4a" stroke-width=".8" fill="none"/><path d="M1.8 1.8 h3.6 l-.6 8 h-2.4Z" fill="#ffc21a" stroke="#e8941a" stroke-width=".5"/><ellipse cx="3.6" cy="13" rx="2.2" ry="1.6" fill="#ffc21a" stroke="#e8941a" stroke-width=".5"/></svg>
<div class="tx" style="left:58px;top:334px">Offset 3d 1</div>
<div class="a" style="left:50px;top:361px;width:16px;height:1px;background:repeating-linear-gradient(90deg,#d8d8d8 0 1px,transparent 1px 2px)"></div>
<div class="tx" style="left:71px;top:352px">类别 : 精加工</div>
<div class="a" style="left:50px;top:379px;width:16px;height:1px;background:repeating-linear-gradient(90deg,#d8d8d8 0 1px,transparent 1px 2px)"></div>
<div class="tx" style="left:71px;top:370px">刀具 : Ball Endmill D10</div>
<div class="a" style="left:50px;top:397px;width:16px;height:1px;background:repeating-linear-gradient(90deg,#d8d8d8 0 1px,transparent 1px 2px)"></div>
<div class="tx" style="left:71px;top:388px">参数</div>
<div class="a" style="left:50px;top:415px;width:16px;height:1px;background:repeating-linear-gradient(90deg,#d8d8d8 0 1px,transparent 1px 2px)"></div>
<div class="tx" style="left:71px;top:406px">参考工序 (undefined)</div>
<svg style="left:38px;top:428px" width="8" height="10" viewBox="0 0 8 10"><path d="M1.5 1 L5.5 5 L1.5 9 Z" fill="#fff" stroke="#9a9a9a" stroke-width="1"/></svg>
<svg style="left:50px;top:425px" width="16" height="16" viewBox="0 0 16 16"><path d="M8 .8 L15.4 4.4 L15.4 10.6 L8 15 L.6 10.6 L.6 4.4Z" fill="#1a7ab8" stroke="#0f4f80" stroke-width=".6"/><path d="M8 9.4 L8 15 L.6 10.6 L.6 4.4Z" fill="#1a90d0"/><path d="M8 1.6 L14 4.6 L8 8.6 L2 4.6Z" fill="#f58a1a" stroke="#c8501a" stroke-width=".6"/><path d="M8 3.2 L10.6 4.7 L8 6.4 L5.4 4.7Z" fill="#ffd83a"/></svg>
<div class="tx" style="left:71px;top:424px">特征</div>
<svg style="left:24px;top:446px" width="8" height="10" viewBox="0 0 8 10"><path d="M1.5 1 L5.5 5 L1.5 9 Z" fill="#fff" stroke="#9a9a9a" stroke-width="1"/></svg>
<svg style="left:36px;top:443px" width="16" height="16" viewBox="0 0 16 16"><path d="M3.5 6 L11 3.5 C13 6 14.5 9.5 14.8 12 L7.5 15.5 C7 12 5.5 9 3.5 6Z" fill="#c4c4c4" stroke="#9a9a9a" stroke-width=".5"/><ellipse cx="9" cy="9.5" rx="3.6" ry="2.6" fill="#8e8e8e"/><path d="M1 1.5 h13.5 M1 3.9 h12 M1 6.3 h11 M1 8.7 h9 M1 11.1 h5 M1 13.5 h3" stroke="#ea3a3a" stroke-width="1" fill="none" opacity=".85"/></svg>
<div class="tx" style="left:58px;top:442px">Pencil Cut 1</div>
<svg style="left:24px;top:465px" width="8" height="8" viewBox="0 0 8 8"><path d="M6.5 0.5 L6.5 6.5 L0.5 6.5 Z" fill="#404040" stroke="#262626" stroke-width="1"/></svg>
<svg style="left:36px;top:461px" width="16" height="16" viewBox="0 0 16 16"><path d="M.8 6.5 L8 9.5 L15.4 6 L15.4 15 L8 11.6 L.8 15.5Z" fill="#1a3f74"/><path d="M8 9.5 L15.4 6 L15.4 15 L11 13Z" fill="#2a8ad0"/><path d="M1.2 15.2 L8 11.6 L15 15" stroke="#d8202a" stroke-width="1.1" fill="none"/><path d="M1.5 1.5 h13.5 M1.5 3.9 h11 M1.5 6.3 h9 M1.5 8.7 h7 M1.5 11.1 h5" stroke="#ea3a3a" stroke-width="1" fill="none" opacity=".9"/><rect x="7.5" y="2" width="1.3" height="6" fill="#3a3a3a"/></svg>
<div class="tx" style="left:58px;top:460px">Swarfcut 1</div>
<div class="a" style="left:50px;top:487px;width:16px;height:1px;background:repeating-linear-gradient(90deg,#d8d8d8 0 1px,transparent 1px 2px)"></div>
<div class="tx" style="left:71px;top:478px">类别 : 精加工</div>
<div class="a" style="left:50px;top:505px;width:16px;height:1px;background:repeating-linear-gradient(90deg,#d8d8d8 0 1px,transparent 1px 2px)"></div>
<div class="tx" style="left:71px;top:496px">刀具 : Endmill D6/1</div>
<div class="a" style="left:50px;top:523px;width:16px;height:1px;background:repeating-linear-gradient(90deg,#d8d8d8 0 1px,transparent 1px 2px)"></div>
<div class="tx" style="left:71px;top:514px">参数</div>
<svg style="left:38px;top:536px" width="8" height="10" viewBox="0 0 8 10"><path d="M1.5 1 L5.5 5 L1.5 9 Z" fill="#fff" stroke="#9a9a9a" stroke-width="1"/></svg>
<svg style="left:50px;top:533px" width="16" height="16" viewBox="0 0 16 16"><path d="M8 .8 L15.4 4.4 L15.4 10.6 L8 15 L.6 10.6 L.6 4.4Z" fill="#1a7ab8" stroke="#0f4f80" stroke-width=".6"/><path d="M8 9.4 L8 15 L.6 10.6 L.6 4.4Z" fill="#1a90d0"/><path d="M8 1.6 L14 4.6 L8 8.6 L2 4.6Z" fill="#f58a1a" stroke="#c8501a" stroke-width=".6"/><path d="M8 3.2 L10.6 4.7 L8 6.4 L5.4 4.7Z" fill="#ffd83a"/></svg>
<div class="tx" style="left:71px;top:532px">特征</div>
<svg style="left:24px;top:555px" width="8" height="8" viewBox="0 0 8 8"><path d="M6.5 0.5 L6.5 6.5 L0.5 6.5 Z" fill="#404040" stroke="#262626" stroke-width="1"/></svg>
<svg style="left:36px;top:551px" width="16" height="16" viewBox="0 0 16 16"><path d="M3 5.5 L11 2.5 C12.5 6 14 9 15 11.5 L7 15.5 C6.5 12 5 9 3 5.5Z" fill="#3ac4b0" stroke="#2a9a8a" stroke-width=".5"/><path d="M1 1.5 h13.5 M1 3.9 h12 M1 6.3 h6 M1 8.7 h5 M1 11.1 h5 M1 13.5 h4" stroke="#ea3a3a" stroke-width="1" fill="none" opacity=".8"/><ellipse cx="8.3" cy="7.2" rx="3.3" ry="3" fill="none" stroke="#c82a2a" stroke-width="1.1"/><rect x="6.8" y="3" width="3" height="5.5" rx="1.2" fill="#2aa898" stroke="#1a7a70" stroke-width=".4"/></svg>
<div class="tx" style="left:58px;top:550px">笔式清根切削 1</div>
<div class="a" style="left:50px;top:577px;width:16px;height:1px;background:repeating-linear-gradient(90deg,#d8d8d8 0 1px,transparent 1px 2px)"></div>
<div class="tx" style="left:71px;top:568px">类别 : 精加工</div>
<div class="a" style="left:50px;top:595px;width:16px;height:1px;background:repeating-linear-gradient(90deg,#d8d8d8 0 1px,transparent 1px 2px)"></div>
<div class="tx" style="left:71px;top:586px">刀具 : Ball Endmill D5</div>
<div class="a" style="left:50px;top:613px;width:16px;height:1px;background:repeating-linear-gradient(90deg,#d8d8d8 0 1px,transparent 1px 2px)"></div>
<div class="tx" style="left:71px;top:604px">参数</div>
<div class="a" style="left:50px;top:631px;width:16px;height:1px;background:repeating-linear-gradient(90deg,#d8d8d8 0 1px,transparent 1px 2px)"></div>
<div class="tx" style="left:71px;top:622px">参考工序 (undefined)</div>
<svg style="left:38px;top:644px" width="8" height="10" viewBox="0 0 8 10"><path d="M1.5 1 L5.5 5 L1.5 9 Z" fill="#fff" stroke="#9a9a9a" stroke-width="1"/></svg>
<svg style="left:50px;top:641px" width="16" height="16" viewBox="0 0 16 16"><path d="M8 .8 L15.4 4.4 L15.4 10.6 L8 15 L.6 10.6 L.6 4.4Z" fill="#1a7ab8" stroke="#0f4f80" stroke-width=".6"/><path d="M8 9.4 L8 15 L.6 10.6 L.6 4.4Z" fill="#1a90d0"/><path d="M8 1.6 L14 4.6 L8 8.6 L2 4.6Z" fill="#f58a1a" stroke="#c8501a" stroke-width=".6"/><path d="M8 3.2 L10.6 4.7 L8 6.4 L5.4 4.7Z" fill="#ffd83a"/></svg>
<div class="tx" style="left:71px;top:640px">特征</div>
<svg style="left:10px;top:662px" width="8" height="10" viewBox="0 0 8 10"><path d="M1.5 1 L5.5 5 L1.5 9 Z" fill="#fff" stroke="#9a9a9a" stroke-width="1"/></svg>
<svg style="left:22px;top:659px" width="16" height="16" viewBox="0 0 16 16"><path d="M5.5 2.2 L12.5 .8 L12.5 10.2 L4 15.4 L.8 13.6 L.8 11.2 L7.8 8.2 L7.8 4.6 L5.5 4.8Z" fill="#1a6aa4" stroke="#0f4674" stroke-width=".6"/><path d="M10 1.6 L12.5 .8 L12.5 10.2 L10 11.6Z" fill="#124f80"/></svg>
<div class="tx" style="left:43px;top:658px">设备 : SNK FPS</div>
<svg style="left:22px;top:677px" width="16" height="16" viewBox="0 0 16 16"><rect x="1.5" y="1" width="13" height="14.5" rx="1.2" fill="#f7a21e" stroke="#d8681a" stroke-width=".9"/><path d="M3.2 4 h8 M3.2 6.6 h5.6 M3.2 9.2 h8 M3.2 11.8 h8" stroke="#ffe27a" stroke-width="1.2" fill="none"/></svg>
<div class="tx" style="left:43px;top:676px">输出</div>
<div class="a" style="left:311px;top:167px;width:1368px;height:814px;background:#fff;border-left:1px solid #c3c7cd;border-top:1px solid #c3c7cd"></div>
<div class="a" style="left:314px;top:145px;width:243px;height:23px;background:#fcfcfd;border:1px solid #c3c7cd;border-bottom:none"></div>
<div class="a t" style="left:345px;top:150px;letter-spacing:-.12px">pencil_shoe_cut.Z3 - [7. Cam plan]</div>
<svg style="left:328px;top:152px" width="11" height="11" viewBox="0 0 11 11"><path d="M5.5 .8 V10.2 M.8 5.5 H10.2" stroke="#6a5a1e" stroke-width="1.8" fill="none"/></svg><svg style="left:533px;top:152px" width="11" height="11" viewBox="0 0 11 11"><path d="M1.2 1.2 L9.8 9.8 M9.8 1.2 L1.2 9.8" stroke="#8f7e3e" stroke-width="1.7" fill="none"/></svg><svg style="left:564px;top:152px" width="11" height="11" viewBox="0 0 11 11"><path d="M5.5 .8 V10.2 M.8 5.5 H10.2" stroke="#a9a092" stroke-width="1.6" fill="none"/></svg><svg style="left:1662px;top:154px" width="9" height="7" viewBox="0 0 9 7"><rect x=".5" y=".3" width="8" height="1.2" fill="#8d939b"/><path d="M.8 2.6 h7.4 L4.5 6.4Z" fill="#8d939b"/></svg>
<svg style="left:0;top:0" width="1679" height="1007" viewBox="0 0 1679 1007">
<defs>
<pattern id="h1" width="3" height="3" patternUnits="userSpaceOnUse"><path d="M0 0h1v1h-1zM1 1h1v1h-1zM2 2h1v1h-1z" fill="#0f0" transform="translate(1 0)"/><path d="M0 0h1v1h-1zM1 1h1v1h-1zM2 2h1v1h-1z" fill="#0f0" transform="translate(2 0)"/><path d="M0 1h1v1h-1zM0 2h1v1h-1zM1 2h1v1h-1z" fill="#0f0"/></pattern>
<pattern id="h2" width="3" height="3" patternUnits="userSpaceOnUse"><path d="M0 0h2v1h-2zM0 1h1v1h-1zM2 1h1v1h-1zM1 2h2v1h-2z" fill="#0f0"/></pattern>
<linearGradient id="cyl" x1="0" x2="1" y1="0" y2="0"><stop offset="0" stop-color="#a0a0a0"/><stop offset=".15" stop-color="#bdbdbd"/><stop offset=".2" stop-color="#fdfdfd"/><stop offset=".38" stop-color="#fdfdfd"/><stop offset=".45" stop-color="#b8b8b8"/><stop offset=".7" stop-color="#a6a6a6"/><stop offset=".82" stop-color="#6e6e6e"/><stop offset="1" stop-color="#595959"/></linearGradient>
<linearGradient id="lf" x1="440" y1="700" x2="817" y2="900" gradientUnits="userSpaceOnUse"><stop offset="0" stop-color="#877c70"/><stop offset="1" stop-color="#82786d"/></linearGradient>

<pattern id="h3" width="4" height="4" patternUnits="userSpaceOnUse"><path d="M0 0h3v1h-3zM2 1h2v1h-2zM0 2h1v1h-1zM2 2h2v1h-2zM0 3h2v1h-2z" fill="#0f0"/></pattern>
<linearGradient id="gsole" x1="600" y1="0" x2="1046" y2="0" gradientUnits="userSpaceOnUse"><stop offset="0" stop-color="#7a7a7a"/><stop offset=".09" stop-color="#6a6a6a"/><stop offset=".135" stop-color="#a8a8a8"/><stop offset=".17" stop-color="#ececec"/><stop offset=".22" stop-color="#cfcfcf"/><stop offset=".3" stop-color="#858585"/><stop offset=".6" stop-color="#6c6c6c"/><stop offset="1" stop-color="#505050"/></linearGradient>
<linearGradient id="gwall" x1="640" y1="760" x2="1330" y2="500" gradientUnits="userSpaceOnUse"><stop offset="0" stop-color="#9a9a9a"/><stop offset=".3" stop-color="#8a8a8a"/><stop offset=".55" stop-color="#6a6a6a"/><stop offset=".68" stop-color="#444"/><stop offset="1" stop-color="#3a3a3a"/></linearGradient>
<filter id="bl2" x="-20%" y="-20%" width="140%" height="140%"><feGaussianBlur stdDeviation="2"/></filter>
<filter id="bl3" x="-20%" y="-20%" width="140%" height="140%"><feGaussianBlur stdDeviation="3"/></filter>
<filter id="bl6" x="-20%" y="-20%" width="140%" height="140%"><feGaussianBlur stdDeviation="6"/></filter>
<filter id="bl10" x="-30%" y="-30%" width="160%" height="160%"><feGaussianBlur stdDeviation="10"/></filter>
<clipPath id="shoec"><path d="M601.5 650.0 C601.2 656.7 599.8 679.8 600.0 690.0 C600.2 700.2 599.8 701.7 603.0 711.0 C606.2 720.3 610.0 736.2 619.0 746.0 C628.0 755.8 643.2 765.7 657.0 770.0 C670.8 774.3 684.3 773.3 702.0 772.0 C719.7 770.7 743.3 765.1 763.0 762.0 C782.7 758.9 801.3 759.1 820.0 753.5 C838.7 747.9 850.0 737.7 875.0 728.5 C900.0 719.3 943.0 708.8 970.0 698.5 C997.0 688.2 1015.3 677.3 1037.0 666.7 C1058.7 656.1 1079.0 645.5 1100.0 635.0 C1121.0 624.5 1143.5 612.9 1163.0 603.5 C1182.5 594.1 1202.5 585.8 1217.0 578.5 C1231.5 571.2 1236.2 567.2 1250.0 560.0 C1263.8 552.8 1286.0 543.0 1300.0 535.0 C1314.0 527.0 1326.0 516.5 1334.0 512.0 C1342.0 507.5 1345.7 508.7 1348.0 508.0 C1349.2 505.0 1353.4 497.3 1355.0 490.0 C1356.6 482.7 1358.3 473.3 1357.5 464.0 C1356.7 454.7 1355.2 444.7 1350.0 434.0 C1344.8 423.3 1334.3 410.0 1326.0 400.0 C1317.7 390.0 1309.5 381.8 1300.0 374.0 C1290.5 366.2 1278.2 358.3 1269.0 353.0 C1259.8 347.7 1252.2 344.6 1245.0 342.0 C1237.8 339.4 1236.3 337.2 1226.0 337.5 C1215.7 337.8 1197.3 341.8 1183.0 344.0 C1168.7 346.2 1154.7 346.3 1140.0 351.0 C1125.3 355.7 1110.3 364.3 1095.0 372.0 C1079.7 379.7 1060.5 387.8 1048.0 397.0 C1035.5 406.2 1028.0 418.2 1020.0 427.0 C1012.0 435.8 1007.5 442.8 1000.0 450.0 C992.5 457.2 983.3 465.3 975.0 470.0 C966.7 474.7 959.2 477.3 950.0 478.0 C940.8 478.7 932.7 474.3 920.0 474.0 C907.3 473.7 886.9 475.0 873.6 476.0 C860.3 477.0 851.3 478.5 840.0 480.0 C828.7 481.5 814.7 483.5 806.0 485.0 C797.3 486.5 794.5 487.6 788.0 489.0 C781.5 490.4 774.5 491.0 767.0 493.5 C759.5 496.0 751.0 500.2 743.0 504.0 C735.0 507.8 727.0 511.8 719.0 516.0 C711.0 520.2 703.0 523.7 695.0 529.0 C687.0 534.3 679.0 542.2 671.0 548.0 C663.0 553.8 653.9 557.8 647.0 564.0 C640.1 570.2 634.8 578.6 629.5 585.5 C624.2 592.4 619.6 598.4 615.0 605.5 C610.4 612.6 604.2 620.6 602.0 628.0 C599.8 635.4 601.6 646.3 601.5 650.0Z"/></clipPath>
<clipPath id="topc"><path d="M440.0 668.5 C453.3 660.8 500.5 633.2 520.0 622.0 C539.5 610.8 547.0 608.0 557.0 601.5 C567.0 595.0 573.2 589.1 580.0 583.0 C586.8 576.9 588.0 572.2 598.0 565.0 C608.0 557.8 627.8 547.1 640.0 540.0 C652.2 532.9 659.5 528.9 671.0 522.5 C682.5 516.1 697.0 507.6 709.0 501.5 C721.0 495.4 727.5 492.0 743.0 486.0 C758.5 480.0 782.2 471.9 802.0 465.5 C821.8 459.1 848.0 451.8 862.0 447.5 C876.0 443.2 873.0 445.9 886.0 440.0 C899.0 434.1 921.0 421.8 940.0 412.0 C959.0 402.2 982.2 390.0 1000.0 381.0 C1017.8 372.0 1021.2 371.2 1047.0 358.0 C1072.8 344.8 1137.0 310.9 1155.0 301.5 L1532.5 514 C1513.4 523.9 1448.9 556.7 1418.0 573.5 C1387.1 590.3 1367.7 604.2 1347.0 615.0 C1326.3 625.8 1310.7 631.2 1294.0 638.0 C1277.3 644.8 1262.7 649.9 1247.0 656.0 C1231.3 662.1 1216.8 668.6 1200.0 674.6 C1183.2 680.6 1163.3 685.9 1146.0 692.0 C1128.7 698.1 1114.7 703.1 1096.0 711.5 C1077.3 719.9 1055.5 730.6 1034.0 742.5 C1012.5 754.4 989.3 770.4 967.0 783.0 C944.7 795.6 925.0 804.8 900.0 818.0 C875.0 831.2 830.8 854.7 817.0 862.0 L727 810 C725.8 810.2 723.8 810.6 720.0 811.0 C716.2 811.4 714.3 814.6 704.0 812.4 C693.7 810.2 671.3 802.0 658.0 798.0 C644.7 794.0 633.5 792.3 624.0 788.6 C614.5 784.9 610.3 782.5 601.0 775.7 C591.7 768.9 581.1 758.1 568.0 748.0 C554.9 737.9 543.8 728.2 522.5 715.0 C501.2 701.8 453.8 676.2 440.0 668.5Z"/><path d="M601.5 650.0 C601.2 656.7 599.8 679.8 600.0 690.0 C600.2 700.2 599.8 701.7 603.0 711.0 C606.2 720.3 610.0 736.2 619.0 746.0 C628.0 755.8 643.2 765.7 657.0 770.0 C670.8 774.3 684.3 773.3 702.0 772.0 C719.7 770.7 743.3 765.1 763.0 762.0 C782.7 758.9 801.3 759.1 820.0 753.5 C838.7 747.9 850.0 737.7 875.0 728.5 C900.0 719.3 943.0 708.8 970.0 698.5 C997.0 688.2 1015.3 677.3 1037.0 666.7 C1058.7 656.1 1079.0 645.5 1100.0 635.0 C1121.0 624.5 1143.5 612.9 1163.0 603.5 C1182.5 594.1 1202.5 585.8 1217.0 578.5 C1231.5 571.2 1236.2 567.2 1250.0 560.0 C1263.8 552.8 1286.0 543.0 1300.0 535.0 C1314.0 527.0 1326.0 516.5 1334.0 512.0 C1342.0 507.5 1345.7 508.7 1348.0 508.0 C1349.2 505.0 1353.4 497.3 1355.0 490.0 C1356.6 482.7 1358.3 473.3 1357.5 464.0 C1356.7 454.7 1355.2 444.7 1350.0 434.0 C1344.8 423.3 1334.3 410.0 1326.0 400.0 C1317.7 390.0 1309.5 381.8 1300.0 374.0 C1290.5 366.2 1278.2 358.3 1269.0 353.0 C1259.8 347.7 1252.2 344.6 1245.0 342.0 C1237.8 339.4 1236.3 337.2 1226.0 337.5 C1215.7 337.8 1197.3 341.8 1183.0 344.0 C1168.7 346.2 1154.7 346.3 1140.0 351.0 C1125.3 355.7 1110.3 364.3 1095.0 372.0 C1079.7 379.7 1060.5 387.8 1048.0 397.0 C1035.5 406.2 1028.0 418.2 1020.0 427.0 C1012.0 435.8 1007.5 442.8 1000.0 450.0 C992.5 457.2 983.3 465.3 975.0 470.0 C966.7 474.7 959.2 477.3 950.0 478.0 C940.8 478.7 932.7 474.3 920.0 474.0 C907.3 473.7 886.9 475.0 873.6 476.0 C860.3 477.0 851.3 478.5 840.0 480.0 C828.7 481.5 814.7 483.5 806.0 485.0 C797.3 486.5 794.5 487.6 788.0 489.0 C781.5 490.4 774.5 491.0 767.0 493.5 C759.5 496.0 751.0 500.2 743.0 504.0 C735.0 507.8 727.0 511.8 719.0 516.0 C711.0 520.2 703.0 523.7 695.0 529.0 C687.0 534.3 679.0 542.2 671.0 548.0 C663.0 553.8 653.9 557.8 647.0 564.0 C640.1 570.2 634.8 578.6 629.5 585.5 C624.2 592.4 619.6 598.4 615.0 605.5 C610.4 612.6 604.2 620.6 602.0 628.0 C599.8 635.4 601.6 646.3 601.5 650.0Z"/></clipPath>
</defs>
<path d="M440 668.5 L522.5 715 C530.1 720.5 554.9 737.9 568.0 748.0 C581.1 758.1 591.7 768.9 601.0 775.7 C610.3 782.5 614.5 784.9 624.0 788.6 C633.5 792.3 644.7 794.0 658.0 798.0 C671.3 802.0 693.7 810.2 704.0 812.4 C714.3 814.6 716.2 811.4 720.0 811.0 C723.8 810.6 725.8 810.2 727.0 810.0 L817 862 L817 956 L440 745Z" fill="url(#lf)" stroke="#1a1a1a" stroke-width="1"/>
<path d="M817 862 C830.8 854.7 875.0 831.2 900.0 818.0 C925.0 804.8 944.7 795.6 967.0 783.0 C989.3 770.4 1012.5 754.4 1034.0 742.5 C1055.5 730.6 1077.3 719.9 1096.0 711.5 C1114.7 703.1 1128.7 698.1 1146.0 692.0 C1163.3 685.9 1183.2 680.6 1200.0 674.6 C1216.8 668.6 1231.3 662.1 1247.0 656.0 C1262.7 649.9 1277.3 644.8 1294.0 638.0 C1310.7 631.2 1326.3 625.8 1347.0 615.0 C1367.7 604.2 1387.1 590.3 1418.0 573.5 C1448.9 556.7 1513.4 523.9 1532.5 514.0 L1532.5 570 L817 956Z" fill="#404040" stroke="#1a1a1a" stroke-width="1"/>
<path d="M440.0 668.5 C453.3 660.8 500.5 633.2 520.0 622.0 C539.5 610.8 547.0 608.0 557.0 601.5 C567.0 595.0 573.2 589.1 580.0 583.0 C586.8 576.9 588.0 572.2 598.0 565.0 C608.0 557.8 627.8 547.1 640.0 540.0 C652.2 532.9 659.5 528.9 671.0 522.5 C682.5 516.1 697.0 507.6 709.0 501.5 C721.0 495.4 727.5 492.0 743.0 486.0 C758.5 480.0 782.2 471.9 802.0 465.5 C821.8 459.1 848.0 451.8 862.0 447.5 C876.0 443.2 873.0 445.9 886.0 440.0 C899.0 434.1 921.0 421.8 940.0 412.0 C959.0 402.2 982.2 390.0 1000.0 381.0 C1017.8 372.0 1021.2 371.2 1047.0 358.0 C1072.8 344.8 1137.0 310.9 1155.0 301.5 L1532.5 514 C1513.4 523.9 1448.9 556.7 1418.0 573.5 C1387.1 590.3 1367.7 604.2 1347.0 615.0 C1326.3 625.8 1310.7 631.2 1294.0 638.0 C1277.3 644.8 1262.7 649.9 1247.0 656.0 C1231.3 662.1 1216.8 668.6 1200.0 674.6 C1183.2 680.6 1163.3 685.9 1146.0 692.0 C1128.7 698.1 1114.7 703.1 1096.0 711.5 C1077.3 719.9 1055.5 730.6 1034.0 742.5 C1012.5 754.4 989.3 770.4 967.0 783.0 C944.7 795.6 925.0 804.8 900.0 818.0 C875.0 831.2 830.8 854.7 817.0 862.0 L727 810 C725.8 810.2 723.8 810.6 720.0 811.0 C716.2 811.4 714.3 814.6 704.0 812.4 C693.7 810.2 671.3 802.0 658.0 798.0 C644.7 794.0 633.5 792.3 624.0 788.6 C614.5 784.9 610.3 782.5 601.0 775.7 C591.7 768.9 581.1 758.1 568.0 748.0 C554.9 737.9 543.8 728.2 522.5 715.0 C501.2 701.8 453.8 676.2 440.0 668.5Z" fill="#d9dbe6"/>
<path d="M601.5 650.0 C601.2 656.7 599.8 679.8 600.0 690.0 C600.2 700.2 599.8 701.7 603.0 711.0 C606.2 720.3 610.0 736.2 619.0 746.0 C628.0 755.8 643.2 765.7 657.0 770.0 C670.8 774.3 684.3 773.3 702.0 772.0 C719.7 770.7 743.3 765.1 763.0 762.0 C782.7 758.9 801.3 759.1 820.0 753.5 C838.7 747.9 850.0 737.7 875.0 728.5 C900.0 719.3 943.0 708.8 970.0 698.5 C997.0 688.2 1015.3 677.3 1037.0 666.7 C1058.7 656.1 1079.0 645.5 1100.0 635.0 C1121.0 624.5 1143.5 612.9 1163.0 603.5 C1182.5 594.1 1202.5 585.8 1217.0 578.5 C1231.5 571.2 1236.2 567.2 1250.0 560.0 C1263.8 552.8 1286.0 543.0 1300.0 535.0 C1314.0 527.0 1326.0 516.5 1334.0 512.0 C1342.0 507.5 1345.7 508.7 1348.0 508.0 C1349.2 505.0 1353.4 497.3 1355.0 490.0 C1356.6 482.7 1358.3 473.3 1357.5 464.0 C1356.7 454.7 1355.2 444.7 1350.0 434.0 C1344.8 423.3 1334.3 410.0 1326.0 400.0 C1317.7 390.0 1309.5 381.8 1300.0 374.0 C1290.5 366.2 1278.2 358.3 1269.0 353.0 C1259.8 347.7 1252.2 344.6 1245.0 342.0 C1237.8 339.4 1236.3 337.2 1226.0 337.5 C1215.7 337.8 1197.3 341.8 1183.0 344.0 C1168.7 346.2 1154.7 346.3 1140.0 351.0 C1125.3 355.7 1110.3 364.3 1095.0 372.0 C1079.7 379.7 1060.5 387.8 1048.0 397.0 C1035.5 406.2 1028.0 418.2 1020.0 427.0 C1012.0 435.8 1007.5 442.8 1000.0 450.0 C992.5 457.2 983.3 465.3 975.0 470.0 C966.7 474.7 959.2 477.3 950.0 478.0 C940.8 478.7 932.7 474.3 920.0 474.0 C907.3 473.7 886.9 475.0 873.6 476.0 C860.3 477.0 851.3 478.5 840.0 480.0 C828.7 481.5 814.7 483.5 806.0 485.0 C797.3 486.5 794.5 487.6 788.0 489.0 C781.5 490.4 774.5 491.0 767.0 493.5 C759.5 496.0 751.0 500.2 743.0 504.0 C735.0 507.8 727.0 511.8 719.0 516.0 C711.0 520.2 703.0 523.7 695.0 529.0 C687.0 534.3 679.0 542.2 671.0 548.0 C663.0 553.8 653.9 557.8 647.0 564.0 C640.1 570.2 634.8 578.6 629.5 585.5 C624.2 592.4 619.6 598.4 615.0 605.5 C610.4 612.6 604.2 620.6 602.0 628.0 C599.8 635.4 601.6 646.3 601.5 650.0Z" fill="#d9dbe6"/>
<g clip-path="url(#topc)">

<rect x="430" y="290" width="1110" height="580" fill="url(#h1)"/>
<g clip-path="url(#shoec)">
<path d="M601.5 650.0 C601.2 656.7 599.8 679.8 600.0 690.0 C600.2 700.2 599.8 701.7 603.0 711.0 C606.2 720.3 610.0 736.2 619.0 746.0 C628.0 755.8 643.2 765.7 657.0 770.0 C670.8 774.3 684.3 773.3 702.0 772.0 C719.7 770.7 743.3 765.1 763.0 762.0 C782.7 758.9 801.3 759.1 820.0 753.5 C838.7 747.9 850.0 737.7 875.0 728.5 C900.0 719.3 943.0 708.8 970.0 698.5 C997.0 688.2 1015.3 677.3 1037.0 666.7 C1058.7 656.1 1079.0 645.5 1100.0 635.0 C1121.0 624.5 1143.5 612.9 1163.0 603.5 C1182.5 594.1 1202.5 585.8 1217.0 578.5 C1231.5 571.2 1236.2 567.2 1250.0 560.0 C1263.8 552.8 1286.0 543.0 1300.0 535.0 C1314.0 527.0 1326.0 516.5 1334.0 512.0 C1342.0 507.5 1345.7 508.7 1348.0 508.0 C1349.2 505.0 1353.4 497.3 1355.0 490.0 C1356.6 482.7 1358.3 473.3 1357.5 464.0 C1356.7 454.7 1355.2 444.7 1350.0 434.0 C1344.8 423.3 1334.3 410.0 1326.0 400.0 C1317.7 390.0 1309.5 381.8 1300.0 374.0 C1290.5 366.2 1278.2 358.3 1269.0 353.0 C1259.8 347.7 1252.2 344.6 1245.0 342.0 C1237.8 339.4 1236.3 337.2 1226.0 337.5 C1215.7 337.8 1197.3 341.8 1183.0 344.0 C1168.7 346.2 1154.7 346.3 1140.0 351.0 C1125.3 355.7 1110.3 364.3 1095.0 372.0 C1079.7 379.7 1060.5 387.8 1048.0 397.0 C1035.5 406.2 1028.0 418.2 1020.0 427.0 C1012.0 435.8 1007.5 442.8 1000.0 450.0 C992.5 457.2 983.3 465.3 975.0 470.0 C966.7 474.7 959.2 477.3 950.0 478.0 C940.8 478.7 932.7 474.3 920.0 474.0 C907.3 473.7 886.9 475.0 873.6 476.0 C860.3 477.0 851.3 478.5 840.0 480.0 C828.7 481.5 814.7 483.5 806.0 485.0 C797.3 486.5 794.5 487.6 788.0 489.0 C781.5 490.4 774.5 491.0 767.0 493.5 C759.5 496.0 751.0 500.2 743.0 504.0 C735.0 507.8 727.0 511.8 719.0 516.0 C711.0 520.2 703.0 523.7 695.0 529.0 C687.0 534.3 679.0 542.2 671.0 548.0 C663.0 553.8 653.9 557.8 647.0 564.0 C640.1 570.2 634.8 578.6 629.5 585.5 C624.2 592.4 619.6 598.4 615.0 605.5 C610.4 612.6 604.2 620.6 602.0 628.0 C599.8 635.4 601.6 646.3 601.5 650.0Z" fill="#fcfcfd"/>
<g filter="url(#bl10)" opacity=".5"><path d="M1146.8 365.5 C1139.3 369.0 1117.0 378.9 1102.2 386.3 C1087.3 393.7 1069.2 401.3 1057.5 409.9 C1045.7 418.5 1039.6 429.1 1031.9 437.7 C1024.1 446.4 1019.2 453.9 1011.1 461.6 C1002.9 469.3 992.8 478.6 982.8 484.0 C972.8 489.4 961.7 493.0 951.2 494.0 C940.6 495.0 932.3 490.3 919.6 490.0 C906.9 489.7 887.7 491.0 874.8 492.0 C861.9 492.9 853.1 494.4 842.1 495.9 C831.1 497.3 817.2 499.3 808.7 500.8 C800.3 502.2 797.5 503.3 791.4 504.6 C785.3 506.0 779.0 506.4 772.1 508.7 C765.1 511.0 757.4 514.9 749.8 518.5 C742.2 522.1 734.0 526.2 726.4 530.2 C718.7 534.2 711.5 537.2 703.9 542.3 C696.2 547.4 688.1 555.3 680.4 560.9 C672.7 566.5 664.1 570.1 657.7 575.9 C651.4 581.6 647.1 588.9 642.2 595.3 C637.3 601.7 632.6 608.0 628.4 614.2 C624.3 620.4 619.1 626.6 617.3 632.6 C615.5 638.7 617.5 647.4 617.5 650.4" fill="none" stroke="#b8b8c0" stroke-width="26"/></g>
<g filter="url(#bl6)"><path d="M657.4 746.0 C664.5 746.8 684.9 751.4 700.1 751.0 C715.4 750.6 730.6 746.8 748.6 743.3 C766.7 739.8 789.5 734.8 808.5 730.2 C827.5 725.6 847.0 720.8 862.5 715.8 C878.1 710.8 886.4 706.0 901.8 700.2 C917.1 694.3 940.3 686.1 954.7 680.7 C969.2 675.3 974.8 672.8 988.7 667.7 C1002.7 662.5 1026.4 653.6 1038.5 649.8 C1050.6 646.0 1057.3 645.7 1061.1 644.9" fill="none" stroke="#808080" stroke-width="20" stroke-opacity=".9"/></g>
<g filter="url(#bl10)"><path d="M980.8 646.9 C986.1 643.3 1003.5 631.2 1012.8 624.9 C1022.2 618.5 1028.8 614.3 1036.9 608.8 C1045.0 603.4 1049.6 599.2 1061.6 592.4 C1073.6 585.7 1092.9 577.0 1108.7 568.4 C1124.6 559.7 1140.7 549.2 1156.7 540.4 C1172.7 531.5 1189.0 523.6 1204.9 515.3 C1220.8 506.9 1237.1 497.5 1252.2 490.1 C1267.2 482.7 1283.5 476.5 1295.3 471.0 C1307.2 465.6 1314.6 458.4 1323.3 457.1 C1331.9 455.9 1343.3 462.4 1347.3 463.5 L1366 520 C1359.7 530.7 1356.0 529.5 1348.0 534.0 C1340.0 538.5 1328.0 549.0 1314.0 557.0 C1300.0 565.0 1277.8 574.8 1264.0 582.0 C1250.2 589.2 1245.5 593.2 1231.0 600.5 C1216.5 607.8 1196.5 616.1 1177.0 625.5 C1157.5 634.9 1135.0 646.5 1114.0 657.0 C1093.0 667.5 1072.7 678.1 1051.0 688.7 C1029.3 699.3 995.2 715.2 984.0 720.5Z" fill="#787878"/></g>
<g filter="url(#bl6)"><path d="M989.3 659.3 C994.6 655.6 1011.9 643.6 1021.2 637.3 C1030.6 631.0 1037.3 626.6 1045.2 621.3 C1053.2 616.0 1057.2 612.1 1069.0 605.5 C1080.7 598.8 1100.1 590.2 1115.9 581.5 C1131.7 572.8 1147.9 562.3 1163.9 553.5 C1179.9 544.7 1196.1 536.9 1211.9 528.5 C1227.7 520.2 1243.8 510.9 1258.8 503.6 C1273.7 496.3 1290.6 489.9 1301.7 484.6 C1312.8 479.3 1318.8 473.1 1325.6 472.0 C1332.5 470.8 1339.9 476.8 1342.8 477.8 L1366 520 C1359.7 530.7 1356.0 529.5 1348.0 534.0 C1340.0 538.5 1328.0 549.0 1314.0 557.0 C1300.0 565.0 1277.8 574.8 1264.0 582.0 C1250.2 589.2 1245.5 593.2 1231.0 600.5 C1216.5 607.8 1196.5 616.1 1177.0 625.5 C1157.5 634.9 1135.0 646.5 1114.0 657.0 C1093.0 667.5 1072.7 678.1 1051.0 688.7 C1029.3 699.3 995.2 715.2 984.0 720.5Z" fill="#303030"/></g>
<path d="M601.0 655.0 C601.3 660.8 601.2 680.5 603.0 690.0 C604.8 699.5 608.7 706.7 612.0 712.0 C615.3 717.3 617.9 718.5 622.6 722.0 C627.3 725.5 634.1 729.8 640.0 733.0 C645.9 736.2 648.0 738.8 658.0 741.0 C668.0 743.2 685.0 746.4 700.0 746.0 C715.0 745.6 729.8 741.9 747.7 738.4 C765.6 734.9 788.4 729.9 807.3 725.3 C826.2 720.7 845.5 716.0 861.0 711.0 C876.5 706.0 884.7 701.3 900.0 695.5 C915.3 689.7 938.5 681.4 953.0 676.0 C967.5 670.6 973.0 668.2 987.0 663.0 C1001.0 657.8 1028.7 648.0 1037.0 645.0 L1046 690 C1028.8 680.0 1000.0 696.2 973.0 706.5 C946.0 716.8 903.0 727.3 878.0 736.5 C853.0 745.7 841.7 755.9 823.0 761.5 C804.3 767.1 785.7 766.9 766.0 770.0 C746.3 773.1 722.7 778.7 705.0 780.0 C687.3 781.3 673.8 782.3 660.0 778.0 C646.2 773.7 631.0 763.8 622.0 754.0 C613.0 744.2 609.2 728.3 606.0 719.0 C602.8 709.7 603.2 708.2 603.0 698.0 C602.8 687.8 604.2 664.7 604.5 658.0Z" fill="url(#gsole)"/>
<rect x="590" y="330" width="780" height="460" fill="url(#h3)"/>
<g filter="url(#bl6)" opacity=".28"><path d="M989.3 659.3 C994.6 655.6 1011.9 643.6 1021.2 637.3 C1030.6 631.0 1037.3 626.6 1045.2 621.3 C1053.2 616.0 1057.2 612.1 1069.0 605.5 C1080.7 598.8 1100.1 590.2 1115.9 581.5 C1131.7 572.8 1147.9 562.3 1163.9 553.5 C1179.9 544.7 1196.1 536.9 1211.9 528.5 C1227.7 520.2 1243.8 510.9 1258.8 503.6 C1273.7 496.3 1290.6 489.9 1301.7 484.6 C1312.8 479.3 1318.8 473.1 1325.6 472.0 C1332.5 470.8 1339.9 476.8 1342.8 477.8 L1366 520 C1359.7 530.7 1356.0 529.5 1348.0 534.0 C1340.0 538.5 1328.0 549.0 1314.0 557.0 C1300.0 565.0 1277.8 574.8 1264.0 582.0 C1250.2 589.2 1245.5 593.2 1231.0 600.5 C1216.5 607.8 1196.5 616.1 1177.0 625.5 C1157.5 634.9 1135.0 646.5 1114.0 657.0 C1093.0 667.5 1072.7 678.1 1051.0 688.7 C1029.3 699.3 995.2 715.2 984.0 720.5Z" fill="#303030"/></g>
<path d="M601.0 655.0 C601.3 660.8 601.2 680.5 603.0 690.0 C604.8 699.5 608.7 706.7 612.0 712.0 C615.3 717.3 617.9 718.5 622.6 722.0 C627.3 725.5 634.1 729.8 640.0 733.0 C645.9 736.2 648.0 738.8 658.0 741.0 C668.0 743.2 685.0 746.4 700.0 746.0 C715.0 745.6 729.8 741.9 747.7 738.4 C765.6 734.9 788.4 729.9 807.3 725.3 C826.2 720.7 845.5 716.0 861.0 711.0 C876.5 706.0 884.7 701.3 900.0 695.5 C915.3 689.7 938.5 681.4 953.0 676.0 C967.5 670.6 973.0 668.2 987.0 663.0 C1001.0 657.8 1028.7 648.0 1037.0 645.0 L1046 690 C1028.8 680.0 1000.0 696.2 973.0 706.5 C946.0 716.8 903.0 727.3 878.0 736.5 C853.0 745.7 841.7 755.9 823.0 761.5 C804.3 767.1 785.7 766.9 766.0 770.0 C746.3 773.1 722.7 778.7 705.0 780.0 C687.3 781.3 673.8 782.3 660.0 778.0 C646.2 773.7 631.0 763.8 622.0 754.0 C613.0 744.2 609.2 728.3 606.0 719.0 C602.8 709.7 603.2 708.2 603.0 698.0 C602.8 687.8 604.2 664.7 604.5 658.0Z" fill="#555" fill-opacity=".18"/>
<g filter="url(#bl3)" opacity=".42"><path d="M660.0 724.1 C666.6 724.9 685.4 729.4 699.5 729.0 C713.6 728.6 727.2 725.1 744.5 721.7 C761.8 718.3 784.8 713.3 803.3 708.8 C821.9 704.3 840.7 699.7 855.8 694.8 C870.9 690.0 878.7 685.4 894.0 679.6 C909.2 673.8 932.5 665.5 947.1 660.1 C961.6 654.6 967.1 652.2 981.1 647.1 C995.1 641.9 1022.9 632.0 1031.2 629.0" fill="none" stroke="#fff" stroke-width="11"/></g>
<g filter="url(#bl6)" opacity=".4"><path d="M1026.4 593.0 C1030.7 590.2 1040.1 582.8 1052.3 575.9 C1064.5 569.0 1083.7 560.4 1099.6 551.7 C1115.5 543.0 1131.4 532.6 1147.5 523.7 C1163.6 514.9 1180.0 506.9 1196.0 498.5 C1212.1 490.0 1228.5 480.5 1243.8 473.0 C1259.1 465.6 1280.5 456.8 1287.9 453.6" fill="none" stroke="#fff" stroke-width="16"/></g>
<g filter="url(#bl3)" opacity=".35"><ellipse cx="682" cy="757" rx="16" ry="11" fill="#fff"/></g>
<path d="M1341.5 505.5 C1342.6 502.6 1346.6 495.3 1348.2 488.5 C1349.7 481.7 1351.3 473.2 1350.5 464.6 C1349.8 456.1 1348.7 447.1 1343.7 437.1 C1338.7 427.1 1328.7 414.1 1320.6 404.5 C1312.6 394.9 1304.7 387.0 1295.5 379.4 C1286.4 371.8 1274.3 364.2 1265.5 359.1 C1256.7 353.9 1249.2 351.0 1242.6 348.6 C1236.1 346.2 1236.0 344.1 1226.2 344.5 C1216.5 344.9 1198.1 348.7 1184.1 350.9 C1170.1 353.1 1156.4 353.1 1142.1 357.7 C1127.8 362.2 1113.1 370.8 1098.1 378.3 C1083.1 385.8 1064.3 393.7 1052.1 402.6 C1040.0 411.6 1033.0 423.0 1025.2 431.7 C1017.4 440.4 1008.6 450.8 1005.3 454.6" fill="none" stroke="#0f0" stroke-width="15" stroke-linecap="butt" stroke-linejoin="round"/>
<path d="M1332.2 501.8 C1333.2 499.3 1337.0 492.5 1338.4 486.4 C1339.8 480.4 1341.2 473.0 1340.6 465.5 C1340.0 458.0 1339.4 450.6 1334.7 441.5 C1330.1 432.4 1320.5 419.9 1312.9 410.9 C1305.3 401.8 1297.9 394.3 1289.2 387.1 C1280.4 379.9 1268.8 372.5 1260.5 367.7 C1252.1 362.8 1244.9 360.2 1239.2 358.0 C1233.6 355.8 1235.5 354.0 1226.5 354.5 C1217.6 355.0 1199.2 358.7 1185.6 360.8 C1172.1 362.9 1159.0 362.8 1145.2 367.2 C1131.3 371.6 1117.1 380.0 1102.6 387.2 C1088.1 394.5 1069.7 402.2 1058.1 410.7 C1046.4 419.2 1040.1 430.0 1032.6 438.4 C1025.1 446.8 1016.1 457.4 1012.8 461.2" fill="none" stroke="#0f0" stroke-width="8" stroke-opacity="0.55" stroke-linecap="butt" stroke-linejoin="round"/>
<path d="M1227.9 350.4 C1220.8 351.4 1199.0 354.7 1185.0 356.8 C1171.0 359.0 1158.0 358.9 1143.9 363.4 C1129.9 367.9 1115.5 376.3 1100.8 383.6 C1086.1 391.0 1067.6 398.8 1055.7 407.5 C1043.8 416.2 1037.3 427.2 1029.6 435.7 C1022.0 444.2 1013.1 454.7 1009.8 458.5" fill="none" stroke="#0f0" stroke-width="14" stroke-linecap="butt" stroke-linejoin="round"/>
<path d="M1229.4 360.2 C1222.3 361.3 1200.3 364.6 1186.6 366.7 C1172.8 368.8 1160.5 368.6 1147.0 372.9 C1133.4 377.2 1119.5 385.5 1105.3 392.6 C1091.1 399.7 1073.0 407.2 1061.6 415.5 C1050.2 423.9 1044.4 434.2 1037.0 442.4 C1029.7 450.7 1020.6 461.3 1017.4 465.1" fill="none" stroke="#0f0" stroke-width="8" stroke-opacity="0.5" stroke-linecap="butt" stroke-linejoin="round"/>
<path d="M1022.6 429.3 C1019.3 433.2 1010.1 445.2 1002.4 452.5 C994.8 459.8 985.4 468.2 976.7 473.1 C968.0 477.9 959.7 480.7 950.3 481.5 C940.8 482.2 932.6 477.8 919.9 477.5 C907.2 477.2 887.1 478.5 873.9 479.5 C860.6 480.5 851.7 482.0 840.5 483.5 C829.3 485.0 815.2 487.0 806.6 488.4 C798.0 489.9 795.2 491.0 788.7 492.4 C782.3 493.8 775.5 494.4 768.1 496.8 C760.7 499.3 752.4 503.5 744.5 507.2 C736.6 510.9 728.5 515.0 720.6 519.1 C712.7 523.2 704.9 526.6 696.9 531.9 C689.0 537.2 681.0 545.0 673.1 550.8 C665.1 556.6 656.1 560.5 649.3 566.6 C642.5 572.7 637.5 580.8 632.3 587.6 C627.0 594.4 622.4 600.5 617.9 607.4 C613.5 614.3 607.5 621.9 605.3 629.0 C603.2 636.1 605.1 646.6 605.0 650.1" fill="none" stroke="#0f0" stroke-width="7" stroke-linecap="butt" stroke-linejoin="round"/>
</g>
<path d="M1040.0 400.0 C1042.5 401.7 1025.5 418.3 1020.0 425.0 C1014.5 431.7 1010.3 433.9 1007.0 440.0 C1003.7 446.1 1001.7 454.3 1000.0 461.5 C998.3 468.7 996.8 476.1 997.0 483.0 C997.2 489.9 1001.9 498.2 1001.5 503.0 C1001.1 507.8 999.9 509.6 994.4 511.5 C988.9 513.4 977.7 514.4 968.6 514.4 C959.5 514.4 945.4 513.9 940.0 511.5 C934.6 509.1 936.0 504.1 936.0 500.0 C936.0 495.9 935.8 490.3 940.0 487.0 C944.2 483.7 955.5 484.2 961.5 480.0 C967.5 475.8 971.5 468.2 975.8 461.5 C980.0 454.8 982.1 447.8 987.0 440.0 C991.9 432.2 996.2 421.7 1005.0 415.0 C1013.8 408.3 1037.5 398.3 1040.0 400.0Z" fill="#0f0"/>
<path d="M1001.5 511.0 C1005.5 513.5 1017.0 521.0 1025.8 525.8 C1034.6 530.6 1047.2 535.2 1054.4 540.0 C1061.6 544.8 1063.9 550.1 1068.7 554.4 C1073.5 558.7 1080.6 564.0 1083.0 565.9" fill="none" stroke="#0f0" stroke-width="6" stroke-linecap="butt" stroke-linejoin="round"/>
<path d="M1167 607 L1207 591 L1296 637 L1246 656.5Z" fill="#d4d8e4"/>
<path d="M558.0 606.0 L570.0 603.0 L598.0 634.0 L590.0 640.0Z" fill="#d4d8e4" opacity=".75"/>
<path d="M566.0 742.0 L580.0 741.0 L592.0 756.0 L578.0 758.0Z" fill="#d4d8e4" opacity=".75"/>
<path d="M602.0 770.0 L612.0 771.0 L619.0 781.0 L607.0 780.0Z" fill="#d4d8e4" opacity=".75"/>
<path d="M619.0 606.0 L606.0 624.0 L592.0 652.0 L582.0 678.0 L586.0 680.0 L600.0 655.0 L612.0 630.0 L622.0 612.0Z" fill="#0f0"/>
</g>
<path d="M1205.7 361.4 C1208.3 358.7 1223.6 358.2 1231.3 359.8 C1239.1 361.4 1247.9 367.0 1252.1 371.0 C1256.4 375.0 1257.0 380.6 1257.0 383.8 C1257.0 387.0 1256.4 389.9 1252.1 390.2 C1247.9 390.5 1237.4 387.8 1231.3 385.4 C1225.2 383.0 1219.6 379.8 1215.3 375.9 C1211.0 371.9 1203.0 364.1 1205.7 361.4Z" fill="none" stroke="#0f0" stroke-width="2.4" stroke-linecap="butt" stroke-linejoin="round"/>
<path d="M1208.8 362.9 C1211.2 360.5 1224.8 360.1 1231.7 361.5 C1238.6 362.9 1246.5 367.9 1250.3 371.5 C1254.1 375.1 1254.6 380.0 1254.6 382.9 C1254.6 385.8 1254.1 388.4 1250.3 388.6 C1246.5 388.8 1237.2 386.4 1231.7 384.3 C1226.2 382.2 1221.2 379.4 1217.4 375.8 C1213.6 372.2 1206.4 365.3 1208.8 362.9Z" fill="none" stroke="#1c2a1c" stroke-width="1.6" stroke-dasharray="2 1" stroke-linecap="butt" stroke-linejoin="round"/>
<path d="M1254.6 382.9 C1253.9 383.8 1254.1 388.4 1250.3 388.6 C1246.5 388.8 1237.2 386.4 1231.7 384.3 C1226.2 382.2 1221.2 379.4 1217.4 375.8 C1213.6 372.2 1210.2 365.0 1208.8 362.9" fill="none" stroke="#7f8f7f" stroke-width="2.2" stroke-opacity="0.7" stroke-linecap="butt" stroke-linejoin="round"/>
<path d="M1159.8 370.8 C1162.4 368.1 1173.4 365.2 1180.6 366.0 C1187.8 366.8 1192.6 369.7 1203.0 375.6 C1213.4 381.5 1236.4 395.2 1243.1 401.1 C1249.8 407.0 1245.8 408.4 1243.1 410.9 C1240.4 413.3 1233.8 417.0 1227.1 415.7 C1220.4 414.3 1213.4 408.4 1203.0 402.8 C1192.6 397.2 1171.8 387.3 1164.6 382.0 C1157.4 376.6 1157.1 373.4 1159.8 370.8Z" fill="none" stroke="#0f0" stroke-width="2.4" stroke-linecap="butt" stroke-linejoin="round"/>
<path d="M1164.4 372.9 C1166.8 370.5 1176.6 367.9 1183.0 368.6 C1189.4 369.3 1193.7 372.0 1203.0 377.2 C1212.3 382.4 1232.8 394.8 1238.8 400.0 C1244.8 405.2 1241.2 406.5 1238.8 408.7 C1236.4 410.9 1230.5 414.2 1224.5 413.0 C1218.5 411.8 1212.3 406.5 1203.0 401.5 C1193.7 396.5 1175.1 387.7 1168.7 382.9 C1162.3 378.1 1162.0 375.3 1164.4 372.9Z" fill="none" stroke="#1c2a1c" stroke-width="1.6" stroke-dasharray="2 1" stroke-linecap="butt" stroke-linejoin="round"/>
<path d="M1238.8 408.7 C1236.4 409.4 1230.5 414.2 1224.5 413.0 C1218.5 411.8 1212.3 406.5 1203.0 401.5 C1193.7 396.5 1175.1 387.7 1168.7 382.9 C1162.3 378.1 1165.1 374.6 1164.4 372.9" fill="none" stroke="#7f8f7f" stroke-width="2.2" stroke-opacity="0.7" stroke-linecap="butt" stroke-linejoin="round"/>
<path d="M1148.6 391.3 C1151.8 388.9 1166.4 388.4 1174.2 389.8 C1181.9 391.1 1190.7 394.5 1195.0 399.3 C1199.3 404.1 1200.6 414.6 1199.8 418.7 C1199.0 422.7 1195.1 423.9 1190.3 423.4 C1185.5 422.8 1176.9 418.6 1171.0 415.4 C1165.2 412.2 1158.8 408.2 1155.0 404.2 C1151.3 400.2 1145.4 393.7 1148.6 391.3Z" fill="none" stroke="#0f0" stroke-width="2.4" stroke-linecap="butt" stroke-linejoin="round"/>
<path d="M1151.6 392.9 C1154.4 390.8 1167.5 390.3 1174.4 391.5 C1181.3 392.7 1189.2 395.7 1193.0 400.0 C1196.8 404.3 1198.0 413.7 1197.3 417.3 C1196.6 420.9 1193.1 422.0 1188.8 421.5 C1184.5 421.0 1176.8 417.2 1171.6 414.4 C1166.3 411.5 1160.6 408.0 1157.3 404.4 C1154.0 400.8 1148.8 395.0 1151.6 392.9Z" fill="none" stroke="#1c2a1c" stroke-width="1.6" stroke-dasharray="2 1" stroke-linecap="butt" stroke-linejoin="round"/>
<path d="M1197.3 417.3 C1195.9 418.0 1193.1 422.0 1188.8 421.5 C1184.5 421.0 1176.8 417.2 1171.6 414.4 C1166.3 411.5 1160.6 408.0 1157.3 404.4 C1154.0 400.8 1152.5 394.8 1151.6 392.9" fill="none" stroke="#7f8f7f" stroke-width="2.2" stroke-opacity="0.7" stroke-linecap="butt" stroke-linejoin="round"/>
<path d="M1110.7 410.0 C1113.3 407.2 1122.6 402.3 1129.8 402.8 C1137.0 403.3 1145.9 408.8 1153.9 413.2 C1161.9 417.6 1174.1 424.4 1177.9 429.2 C1181.6 434.0 1179.0 439.3 1176.3 442.0 C1173.6 444.7 1168.0 446.8 1161.9 445.2 C1155.7 443.7 1147.5 436.7 1139.5 432.5 C1131.4 428.2 1118.6 423.3 1113.8 419.6 C1109.0 415.8 1108.0 412.8 1110.7 410.0Z" fill="none" stroke="#0f0" stroke-width="2.4" stroke-linecap="butt" stroke-linejoin="round"/>
<path d="M1114.4 411.5 C1116.8 409.0 1125.1 404.6 1131.5 405.1 C1137.9 405.6 1145.8 410.5 1153.0 414.4 C1160.2 418.3 1171.1 424.4 1174.4 428.7 C1177.7 433.0 1175.4 437.7 1173.0 440.1 C1170.6 442.5 1165.6 444.4 1160.1 443.0 C1154.6 441.6 1147.2 435.4 1140.1 431.6 C1132.9 427.8 1121.5 423.5 1117.2 420.1 C1112.9 416.8 1112.0 414.0 1114.4 411.5Z" fill="none" stroke="#1c2a1c" stroke-width="1.6" stroke-dasharray="2 1" stroke-linecap="butt" stroke-linejoin="round"/>
<path d="M1173.0 440.1 C1170.8 440.6 1165.6 444.4 1160.1 443.0 C1154.6 441.6 1147.2 435.4 1140.1 431.6 C1132.9 427.8 1121.5 423.5 1117.2 420.1 C1112.9 416.8 1114.9 412.9 1114.4 411.5" fill="none" stroke="#7f8f7f" stroke-width="2.2" stroke-opacity="0.7" stroke-linecap="butt" stroke-linejoin="round"/>
<path d="M1091.4 427.1 C1093.8 423.9 1106.4 422.8 1113.9 423.9 C1121.4 424.9 1131.5 428.7 1136.3 433.5 C1141.1 438.3 1143.2 448.5 1142.7 452.8 C1142.1 457.0 1137.8 458.9 1133.0 459.1 C1128.2 459.4 1119.5 457.0 1113.9 454.3 C1108.3 451.7 1103.2 447.7 1099.4 443.1 C1095.7 438.6 1089.0 430.3 1091.4 427.1Z" fill="none" stroke="#0f0" stroke-width="2.4" stroke-linecap="butt" stroke-linejoin="round"/>
<path d="M1094.3 428.7 C1096.5 425.8 1107.7 424.9 1114.4 425.8 C1121.1 426.8 1130.1 430.1 1134.4 434.4 C1138.7 438.7 1140.6 447.8 1140.1 451.6 C1139.6 455.4 1135.8 457.1 1131.5 457.3 C1127.2 457.5 1119.4 455.4 1114.4 453.0 C1109.4 450.6 1104.8 447.1 1101.5 443.0 C1098.2 438.9 1092.1 431.6 1094.3 428.7Z" fill="none" stroke="#1c2a1c" stroke-width="1.6" stroke-dasharray="2 1" stroke-linecap="butt" stroke-linejoin="round"/>
<path d="M1140.1 451.6 C1138.7 452.6 1135.8 457.1 1131.5 457.3 C1127.2 457.5 1119.4 455.4 1114.4 453.0 C1109.4 450.6 1104.8 447.1 1101.5 443.0 C1098.2 438.9 1095.5 431.1 1094.3 428.7" fill="none" stroke="#7f8f7f" stroke-width="2.2" stroke-opacity="0.7" stroke-linecap="butt" stroke-linejoin="round"/>
<path d="M999.2 503.6 C1002.4 499.3 1015.2 496.9 1023.2 492.4 C1031.2 487.8 1039.2 480.4 1047.2 476.2 C1055.2 472.1 1064.8 468.3 1071.2 467.5 C1077.6 466.7 1083.0 468.4 1085.7 471.4 C1088.3 474.5 1088.3 480.8 1087.2 485.9 C1086.2 490.9 1083.3 496.8 1079.3 501.9 C1075.3 507.0 1069.4 512.6 1063.3 516.3 C1057.1 520.1 1049.1 523.0 1042.4 524.3 C1035.7 525.6 1029.6 525.3 1023.2 524.3 C1016.8 523.2 1008.0 521.4 1004.0 517.9 C1000.0 514.4 996.0 507.8 999.2 503.6Z" fill="none" stroke="#0f0" stroke-width="2.4" stroke-linecap="butt" stroke-linejoin="round"/>
<path d="M1004.4 503.0 C1007.2 499.2 1018.6 497.1 1025.8 493.0 C1033.0 488.9 1040.1 482.3 1047.3 478.6 C1054.5 474.9 1063.0 471.5 1068.7 470.8 C1074.4 470.1 1079.2 471.6 1081.6 474.3 C1084.0 477.0 1084.0 482.7 1083.0 487.2 C1082.0 491.7 1079.5 497.0 1075.9 501.5 C1072.3 506.0 1067.1 511.1 1061.6 514.4 C1056.1 517.7 1049.0 520.3 1043.0 521.5 C1037.0 522.7 1031.5 522.5 1025.8 521.5 C1020.1 520.5 1012.3 518.9 1008.7 515.8 C1005.1 512.7 1001.5 506.8 1004.4 503.0Z" fill="none" stroke="#1c2a1c" stroke-width="1.6" stroke-dasharray="2 1" stroke-linecap="butt" stroke-linejoin="round"/>
<path d="M1083.0 487.2 C1081.8 489.6 1079.5 497.0 1075.9 501.5 C1072.3 506.0 1067.1 511.1 1061.6 514.4 C1056.1 517.7 1049.0 520.3 1043.0 521.5 C1037.0 522.7 1031.5 522.5 1025.8 521.5 C1020.1 520.5 1012.3 518.9 1008.7 515.8 C1005.1 512.7 1005.1 505.1 1004.4 503.0" fill="none" stroke="#7f8f7f" stroke-width="2.2" stroke-opacity="0.7" stroke-linecap="butt" stroke-linejoin="round"/>
<path d="M1024.0 447.0 C1030.0 440.0 1047.3 415.8 1060.0 405.0 C1072.7 394.2 1085.7 388.5 1100.0 382.0 C1114.3 375.5 1134.6 369.9 1145.8 365.8 C1157.0 361.7 1160.1 359.1 1167.3 357.2 C1174.5 355.3 1181.6 354.3 1188.8 354.3 C1196.0 354.3 1201.9 354.8 1210.2 357.2 C1218.5 359.6 1230.5 364.3 1238.8 368.6 C1247.1 372.9 1256.7 380.5 1260.3 382.9" fill="none" stroke="#101810" stroke-width="1" stroke-dasharray="6 3" stroke-linecap="butt" stroke-linejoin="round"/>
<path d="M1300.0 440.0 C1296.8 444.0 1288.1 453.9 1281.0 463.8 C1273.9 473.7 1266.3 488.9 1257.6 499.6 C1248.9 510.3 1238.9 520.9 1229.0 528.0 C1219.1 535.1 1207.2 539.7 1198.0 542.5 C1188.8 545.3 1182.0 546.2 1174.0 545.0 C1166.0 543.8 1157.9 539.4 1150.0 535.0 C1142.1 530.6 1132.9 526.2 1126.5 518.7 C1120.1 511.2 1115.7 497.9 1111.7 490.0 C1107.7 482.1 1105.5 476.3 1102.6 471.0 C1099.7 465.7 1095.8 460.2 1094.5 458.0" fill="none" stroke="#101810" stroke-width="1.2" stroke-linecap="butt" stroke-linejoin="round"/>
<path d="M1300.0 414.4 C1297.2 417.3 1287.7 424.9 1283.0 431.6 C1278.3 438.3 1275.5 445.8 1271.7 454.4 C1267.9 463.0 1262.2 478.2 1260.3 483.0" fill="none" stroke="#101810" stroke-width="1.1" stroke-linecap="butt" stroke-linejoin="round"/>
<path d="M1004.4 454.3 L1094.5 457.9" fill="none" stroke="#101810" stroke-width="1.6" stroke-dasharray="2 1" stroke-linecap="butt" stroke-linejoin="round"/>
<path d="M1004.4 458.6 L1094.5 462.2" fill="none" stroke="#101810" stroke-width="1.2" stroke-dasharray="2 1" stroke-linecap="butt" stroke-linejoin="round"/>
<path d="M1060.0 365.8 C1062.8 370.8 1069.8 388.2 1077.0 395.8 C1084.2 403.4 1092.5 406.0 1103.0 411.5 C1113.5 417.0 1124.8 419.9 1140.0 428.7 C1155.2 437.5 1182.8 456.4 1194.5 464.5 C1206.2 472.6 1204.7 468.4 1210.0 477.3 C1215.3 486.2 1223.8 511.2 1226.5 518.0" fill="none" stroke="#101810" stroke-width="1" stroke-dasharray="7 3 1 3" stroke-linecap="butt" stroke-linejoin="round"/>
<path d="M1068.6 401.5 C1071.9 399.1 1077.6 392.7 1088.6 387.2 C1099.6 381.7 1126.8 371.7 1134.4 368.6" fill="none" stroke="#101810" stroke-width="1" stroke-dasharray="7 3 1 3" stroke-linecap="butt" stroke-linejoin="round"/>
<path d="M1174.4 477.3 C1183.0 472.1 1213.6 454.0 1226.0 445.9 C1238.4 437.8 1240.0 437.5 1248.8 428.7 C1257.6 419.9 1273.9 398.9 1278.9 392.9" fill="none" stroke="#101810" stroke-width="1" stroke-dasharray="7 3 1 3" stroke-linecap="butt" stroke-linejoin="round"/>
<path d="M1157.5 475.8 L1233.7 440.0" fill="none" stroke="#101810" stroke-width="1" stroke-dasharray="7 3 1 3" stroke-linecap="butt" stroke-linejoin="round"/>
<path d="M1081.0 549.7 L1109.8 525.8" fill="none" stroke="#101810" stroke-width="1" stroke-linecap="butt" stroke-linejoin="round"/>
<path d="M1098.0 545.0 C1100.3 542.8 1107.0 533.8 1112.0 532.0 C1117.0 530.2 1121.7 531.3 1128.0 534.0 C1134.3 536.7 1143.0 542.7 1150.0 548.0 C1157.0 553.3 1166.0 560.7 1170.0 566.0 C1174.0 571.3 1173.3 577.7 1174.0 580.0" fill="none" stroke="#101810" stroke-width="1.3" stroke-dasharray="2 1" stroke-linecap="butt" stroke-linejoin="round"/>
<path d="M1092.0 560.0 C1094.3 558.0 1100.7 549.3 1106.0 548.0 C1111.3 546.7 1117.3 549.0 1124.0 552.0 C1130.7 555.0 1139.7 560.7 1146.0 566.0 C1152.3 571.3 1159.0 579.0 1162.0 584.0 C1165.0 589.0 1163.7 594.0 1164.0 596.0" fill="none" stroke="#101810" stroke-width="1.3" stroke-dasharray="2 1" stroke-linecap="butt" stroke-linejoin="round"/>
<path d="M1084.0 574.0 C1086.7 572.3 1094.3 564.7 1100.0 564.0 C1105.7 563.3 1111.7 566.7 1118.0 570.0 C1124.3 573.3 1132.7 579.0 1138.0 584.0 C1143.3 589.0 1148.0 595.3 1150.0 600.0 C1152.0 604.7 1150.0 610.0 1150.0 612.0" fill="none" stroke="#101810" stroke-width="1.3" stroke-dasharray="2 1" stroke-linecap="butt" stroke-linejoin="round"/>
<path d="M1060.0 585.0 C1063.3 586.2 1073.3 588.5 1080.0 592.0 C1086.7 595.5 1093.7 601.0 1100.0 606.0 C1106.3 611.0 1115.0 619.3 1118.0 622.0" fill="none" stroke="#101810" stroke-width="1" stroke-dasharray="3 2" stroke-linecap="butt" stroke-linejoin="round"/>
<path d="M601.0 693.5 C604.6 698.2 613.1 714.1 622.6 722.0 C632.1 729.9 645.1 737.0 658.0 741.0 C670.9 745.0 685.0 746.4 700.0 746.0 C715.0 745.6 729.8 741.9 747.7 738.4 C765.6 734.9 788.4 729.9 807.3 725.3 C826.2 720.7 845.5 716.0 861.0 711.0 C876.5 706.0 884.7 701.3 900.0 695.5 C915.3 689.7 938.5 681.4 953.0 676.0 C967.5 670.6 973.0 668.2 987.0 663.0 C1001.0 657.8 1028.7 648.0 1037.0 645.0" fill="none" stroke="#101810" stroke-width="1.2" stroke-dasharray="3 1 1 1" stroke-linecap="butt" stroke-linejoin="round"/>
<path d="M741.7 799.2 L866.9 733.6" fill="none" stroke="#101810" stroke-width="1" stroke-dasharray="6 2 1 2" stroke-linecap="butt" stroke-linejoin="round"/>
<path d="M608.0 727.0 C612.4 732.9 624.2 755.1 634.5 762.6 C644.8 770.1 654.1 770.8 670.0 772.0 C685.9 773.2 711.7 772.0 730.0 770.0 C748.3 768.0 771.7 761.7 780.0 760.0" fill="none" stroke="#101810" stroke-width="1" stroke-dasharray="3 1 1 1" stroke-linecap="butt" stroke-linejoin="round"/>
<path d="M602.0 655.0 C608.3 652.5 628.3 641.7 640.0 640.0 C651.7 638.3 666.7 644.2 672.0 645.0" fill="none" stroke="#101810" stroke-width="1" stroke-dasharray="3 2" stroke-linecap="butt" stroke-linejoin="round"/>
<path d="M626.0 640.0 C627.0 645.8 626.3 664.2 632.0 675.0 C637.7 685.8 648.7 697.8 660.0 705.0 C671.3 712.2 685.8 716.2 700.0 718.0 C714.2 719.8 737.5 716.3 745.0 716.0" fill="none" stroke="#101810" stroke-width="1" stroke-dasharray="3 2" stroke-linecap="butt" stroke-linejoin="round"/>
<path d="M672.0 645.0 C675.0 650.8 681.2 670.8 690.0 680.0 C698.8 689.2 711.7 696.2 725.0 700.0 C738.3 703.8 762.5 702.5 770.0 703.0" fill="none" stroke="#101810" stroke-width="1" stroke-dasharray="3 2" stroke-linecap="butt" stroke-linejoin="round"/>
<path d="M650.0 725.0 C656.7 719.2 675.0 698.8 690.0 690.0 C705.0 681.2 723.3 677.0 740.0 672.0 C756.7 667.0 771.7 666.2 790.0 660.0 C808.3 653.8 830.8 643.3 850.0 635.0 C869.2 626.7 895.8 614.2 905.0 610.0" fill="none" stroke="#101810" stroke-width="1" stroke-dasharray="6 2 1 2" stroke-linecap="butt" stroke-linejoin="round"/>
<path d="M745.0 716.0 C745.5 711.7 743.8 697.3 748.0 690.0 C752.2 682.7 766.3 675.0 770.0 672.0" fill="none" stroke="#101810" stroke-width="1" stroke-dasharray="3 2" stroke-linecap="butt" stroke-linejoin="round"/>
<path d="M820.0 727.0 C819.2 720.8 818.3 701.2 815.0 690.0 C811.7 678.8 802.5 665.0 800.0 660.0" fill="none" stroke="#101810" stroke-width="1" stroke-dasharray="3 2" stroke-linecap="butt" stroke-linejoin="round"/>
<path d="M800.0 660.0 C806.7 661.7 826.7 665.0 840.0 670.0 C853.3 675.0 869.5 685.3 880.0 690.0 C890.5 694.7 899.2 696.7 903.0 698.0" fill="none" stroke="#101810" stroke-width="1" stroke-dasharray="3 2" stroke-linecap="butt" stroke-linejoin="round"/>
<path d="M860.0 640.0 C863.3 643.3 873.3 654.7 880.0 660.0 C886.7 665.3 891.7 670.7 900.0 672.0 C908.3 673.3 925.0 668.7 930.0 668.0" fill="none" stroke="#101810" stroke-width="1" stroke-dasharray="3 2" stroke-linecap="butt" stroke-linejoin="round"/>
<path d="M905.0 610.0 C909.2 615.0 920.8 632.5 930.0 640.0 C939.2 647.5 950.5 651.0 960.0 655.0 C969.5 659.0 982.5 662.5 987.0 664.0" fill="none" stroke="#101810" stroke-width="1" stroke-dasharray="3 2" stroke-linecap="butt" stroke-linejoin="round"/>
<path d="M930.0 600.0 C935.0 602.5 948.3 608.3 960.0 615.0 C971.7 621.7 990.2 636.8 1000.0 640.0 C1009.8 643.2 1015.8 635.0 1019.0 634.0" fill="none" stroke="#101810" stroke-width="1" stroke-dasharray="3 2" stroke-linecap="butt" stroke-linejoin="round"/>
<path d="M940.0 560.0 C945.8 563.3 963.3 573.3 975.0 580.0 C986.7 586.7 998.7 593.7 1010.0 600.0 C1021.3 606.3 1037.5 615.0 1043.0 618.0" fill="none" stroke="#101810" stroke-width="1" stroke-dasharray="3 2" stroke-linecap="butt" stroke-linejoin="round"/>
<path d="M640.0 600.0 C643.3 597.5 650.0 590.0 660.0 585.0 C670.0 580.0 693.3 572.5 700.0 570.0" fill="none" stroke="#101810" stroke-width="1" stroke-dasharray="5 3" stroke-linecap="butt" stroke-linejoin="round"/>
<path d="M655.0 620.0 C662.5 616.7 685.0 608.3 700.0 600.0 C715.0 591.7 728.3 578.7 745.0 570.0 C761.7 561.3 790.8 551.7 800.0 548.0" fill="none" stroke="#101810" stroke-width="1" stroke-dasharray="5 2 1 2" stroke-linecap="butt" stroke-linejoin="round"/>
<path d="M536.8 617.2 L586.9 643.4" fill="none" stroke="#111" stroke-width="1" stroke-dasharray="5 2 1 2" stroke-linecap="butt" stroke-linejoin="round"/>
<path d="M522.5 715.0 L560.0 693.0 L600.0 670.0" fill="none" stroke="#111" stroke-width="1" stroke-dasharray="5 2 1 2" stroke-linecap="butt" stroke-linejoin="round"/>
<path d="M1430.0 459.0 L1356.0 497.0" fill="none" stroke="#111" stroke-width="1" stroke-dasharray="5 2 1 2" stroke-linecap="butt" stroke-linejoin="round"/>
<path d="M1337.0 522.0 L1423.0 570.0" fill="none" stroke="#111" stroke-width="1" stroke-dasharray="5 2 1 2" stroke-linecap="butt" stroke-linejoin="round"/>
<path d="M1047.7 358.7 L1074.0 373.0" fill="none" stroke="#111" stroke-width="1" stroke-dasharray="5 2 1 2" stroke-linecap="butt" stroke-linejoin="round"/>
<path d="M971.6 706.7 L1033.6 742.5" fill="none" stroke="#111" stroke-width="1" stroke-dasharray="5 2 1 2" stroke-linecap="butt" stroke-linejoin="round"/>
<path d="M869.0 733.0 L959.7 785.4" fill="none" stroke="#111" stroke-width="1" stroke-dasharray="5 2 1 2" stroke-linecap="butt" stroke-linejoin="round"/>
<path d="M819.0 785.4 L885.8 823.5" fill="none" stroke="#0c0" stroke-width="1" stroke-dasharray="5 3" stroke-linecap="butt" stroke-linejoin="round"/>
<path d="M687.5 639.7 C688.6 635.9 694.6 631.3 698.9 629.4 C703.2 627.5 707.7 626.3 713.2 628.3 C718.6 630.4 725.5 637.7 731.7 641.7 C737.8 645.6 746.6 648.9 750.2 652.0 C753.7 655.1 754.2 656.9 753.2 660.2 C752.1 663.4 748.2 669.4 744.0 671.4 C739.7 673.5 734.0 674.3 727.5 672.5 C721.0 670.6 710.8 663.6 705.0 660.2 C699.2 656.8 695.6 655.4 692.7 652.0 C689.8 648.6 686.5 643.5 687.5 639.7Z" fill="none" stroke="#0f0" stroke-width="3.2" stroke-linecap="butt" stroke-linejoin="round"/>
<path d="M682.2 637.9 C683.4 633.5 690.4 628.1 695.4 625.9 C700.4 623.7 705.6 622.3 712.0 624.7 C718.4 627.1 726.3 635.6 733.5 640.2 C740.7 644.8 750.8 648.6 755.0 652.2 C759.2 655.8 759.7 657.9 758.5 661.7 C757.3 665.5 752.8 672.4 747.8 674.8 C742.8 677.2 736.2 678.2 728.7 676.0 C721.2 673.8 709.2 665.7 702.5 661.7 C695.8 657.7 691.6 656.2 688.2 652.2 C684.8 648.2 681.0 642.3 682.2 637.9Z" fill="none" stroke="#a0641e" stroke-width="1.3" stroke-linecap="butt" stroke-linejoin="round"/>
<path d="M699.4 643.7 C700.0 641.3 703.9 638.3 706.6 637.1 C709.4 635.9 712.3 635.1 715.8 636.4 C719.3 637.7 723.7 642.4 727.6 644.9 C731.5 647.5 737.1 649.6 739.4 651.5 C741.7 653.5 742.0 654.7 741.3 656.8 C740.7 658.8 738.2 662.7 735.5 664.0 C732.7 665.3 729.1 665.8 725.0 664.6 C720.8 663.4 714.3 658.9 710.5 656.8 C706.8 654.6 704.5 653.7 702.7 651.5 C700.8 649.4 698.7 646.1 699.4 643.7Z" fill="none" stroke="#1c3a1c" stroke-width="1.6" stroke-dasharray="2 1" stroke-linecap="butt" stroke-linejoin="round"/>
<path d="M735.8 595.6 C735.8 591.8 744.2 587.3 749.1 585.3 C754.1 583.2 758.7 580.2 765.6 583.3 C772.4 586.4 780.6 597.3 790.1 603.8 C799.7 610.3 815.7 617.8 822.9 622.3 C830.1 626.7 832.2 627.4 833.2 630.4 C834.3 633.5 832.9 638.6 829.1 640.7 C825.3 642.7 818.5 644.8 810.6 642.7 C802.8 640.7 792.2 634.2 782.0 628.4 C771.7 622.6 756.8 613.4 749.1 607.9 C741.4 602.4 735.8 599.4 735.8 595.6Z" fill="none" stroke="#0f0" stroke-width="3.2" stroke-linecap="butt" stroke-linejoin="round"/>
<path d="M727.5 592.6 C727.5 588.2 737.2 583.0 743.0 580.6 C748.8 578.2 754.1 574.7 762.1 578.3 C770.1 581.9 779.6 594.5 790.7 602.1 C801.8 609.7 820.4 618.4 828.8 623.6 C837.1 628.8 839.6 629.5 840.8 633.1 C842.0 636.7 840.4 642.6 836.0 645.0 C831.6 647.4 823.6 649.8 814.5 647.4 C805.4 645.0 793.1 637.5 781.2 630.7 C769.3 624.0 752.0 613.2 743.0 606.9 C734.0 600.5 727.5 597.0 727.5 592.6Z" fill="none" stroke="#a0641e" stroke-width="1.3" stroke-linecap="butt" stroke-linejoin="round"/>
<path d="M754.2 602.2 C754.2 599.8 759.5 597.0 762.7 595.6 C765.9 594.3 768.8 592.4 773.2 594.4 C777.6 596.3 782.8 603.3 788.9 607.5 C795.0 611.6 805.3 616.5 809.9 619.3 C814.5 622.1 815.8 622.6 816.5 624.5 C817.1 626.5 816.3 629.8 813.8 631.1 C811.4 632.4 807.0 633.7 802.0 632.4 C797.0 631.1 790.3 626.9 783.7 623.2 C777.1 619.5 767.6 613.6 762.7 610.1 C757.8 606.6 754.2 604.7 754.2 602.2Z" fill="none" stroke="#1c3a1c" stroke-width="1.6" stroke-dasharray="2 1" stroke-linecap="butt" stroke-linejoin="round"/>
<path d="M793.0 560.2 C793.6 556.8 802.0 551.6 806.3 549.9 C810.6 548.2 811.4 546.5 818.6 549.9 C825.8 553.3 837.4 562.9 849.4 570.4 C861.3 577.9 882.5 589.5 890.4 595.0 C898.3 600.5 897.2 600.5 896.5 603.3 C895.8 606.0 891.4 610.4 886.3 611.4 C881.2 612.4 875.4 613.1 865.8 609.4 C856.2 605.6 839.5 595.4 828.9 588.9 C818.3 582.4 808.2 575.2 802.3 570.4 C796.3 565.6 792.3 563.6 793.0 560.2Z" fill="none" stroke="#0f0" stroke-width="3.2" stroke-linecap="butt" stroke-linejoin="round"/>
<path d="M784.7 556.8 C785.5 552.8 795.2 546.9 800.2 544.9 C805.2 542.9 806.1 540.9 814.5 544.9 C822.9 548.9 836.4 560.0 850.3 568.7 C864.2 577.4 888.9 590.9 898.0 597.3 C907.1 603.7 905.9 603.7 905.1 606.9 C904.3 610.1 899.2 615.2 893.2 616.4 C887.2 617.6 880.5 618.4 869.4 614.0 C858.3 609.6 838.8 597.8 826.5 590.2 C814.2 582.7 802.5 574.3 795.5 568.7 C788.5 563.1 783.9 560.8 784.7 556.8Z" fill="none" stroke="#a0641e" stroke-width="1.3" stroke-linecap="butt" stroke-linejoin="round"/>
<path d="M811.3 567.6 C811.7 565.5 817.1 562.2 819.8 561.1 C822.5 560.0 823.1 558.9 827.7 561.1 C832.3 563.3 839.7 569.4 847.3 574.2 C855.0 579.0 868.6 586.4 873.6 589.9 C878.6 593.4 877.9 593.4 877.5 595.2 C877.0 596.9 874.2 599.8 870.9 600.4 C867.7 601.1 864.0 601.5 857.9 599.1 C851.7 596.7 841.0 590.2 834.3 586.0 C827.5 581.9 821.0 577.2 817.2 574.2 C813.4 571.1 810.8 569.8 811.3 567.6Z" fill="none" stroke="#1c3a1c" stroke-width="1.6" stroke-dasharray="2 1" stroke-linecap="butt" stroke-linejoin="round"/>
<path d="M854.2 529.0 C855.2 526.3 862.9 521.5 867.5 520.8 C872.1 520.1 875.0 521.5 881.9 524.9 C888.7 528.3 898.3 535.1 908.5 541.3 C918.8 547.5 936.5 557.1 943.3 561.9 C950.2 566.6 950.9 567.6 949.5 570.0 C948.2 572.4 941.0 575.8 935.2 576.1 C929.4 576.5 923.2 575.8 914.6 572.1 C906.1 568.3 892.8 559.4 883.9 553.6 C875.0 547.8 866.3 541.4 861.4 537.3 C856.4 533.2 853.1 531.7 854.2 529.0Z" fill="none" stroke="#0f0" stroke-width="3.2" stroke-linecap="butt" stroke-linejoin="round"/>
<path d="M846.7 525.8 C847.9 522.6 856.8 517.1 862.2 516.3 C867.6 515.5 871.0 517.0 878.9 521.0 C886.8 525.0 898.0 532.9 909.9 540.1 C921.8 547.3 942.4 558.4 950.4 564.0 C958.4 569.6 959.2 570.7 957.6 573.5 C956.0 576.3 947.7 580.2 940.9 580.6 C934.1 581.0 926.9 580.3 917.0 575.9 C907.1 571.5 891.6 561.1 881.3 554.4 C871.0 547.6 860.9 540.2 855.1 535.4 C849.3 530.6 845.5 529.0 846.7 525.8Z" fill="none" stroke="#a0641e" stroke-width="1.3" stroke-linecap="butt" stroke-linejoin="round"/>
<path d="M870.7 536.1 C871.3 534.4 876.3 531.3 879.2 530.9 C882.2 530.4 884.0 531.3 888.4 533.5 C892.8 535.6 898.9 540.0 905.4 544.0 C912.0 547.9 923.3 554.1 927.7 557.1 C932.1 560.2 932.6 560.8 931.7 562.3 C930.8 563.9 926.2 566.0 922.5 566.2 C918.8 566.5 914.8 566.1 909.4 563.7 C903.9 561.3 895.4 555.5 889.7 551.8 C884.0 548.1 878.5 544.0 875.3 541.4 C872.1 538.8 870.0 537.9 870.7 536.1Z" fill="none" stroke="#1c3a1c" stroke-width="1.6" stroke-dasharray="2 1" stroke-linecap="butt" stroke-linejoin="round"/>
<path d="M649.6 577.0 L662.8 563.8 L676.0 572.6 L715.2 584.7 L706.8 597.9 L691.4 607.8 L658.4 605.6 L647.4 592.4Z" fill="none" stroke="#0f0" stroke-width="2.6" stroke-linecap="butt" stroke-linejoin="round"/>
<path d="M704.0 597.0 L690.0 606.0 L660.0 604.0 L650.0 592.0" fill="none" stroke="#7f927f" stroke-width="3" stroke-opacity="0.8" stroke-linecap="butt" stroke-linejoin="round"/>
<path d="M652.0 578.0 L664.0 566.0 L676.0 574.0 L711.6 585.0 L704.0 597.0 L690.0 606.0 L660.0 604.0 L650.0 592.0Z" fill="none" stroke="#181818" stroke-width="1.2" stroke-dasharray="3 1.5" stroke-linecap="butt" stroke-linejoin="round"/>
<path d="M672.8 548.1 L712.2 525.8 L716.0 530.9 L727.8 536.2 L768.5 544.8 L760.7 554.6 L746.3 562.4 L688.5 562.4 L679.4 557.2Z" fill="none" stroke="#0f0" stroke-width="2.6" stroke-linecap="butt" stroke-linejoin="round"/>
<path d="M764.0 545.0 L756.9 553.9 L743.8 561.0 L691.3 561.0 L683.0 556.3" fill="none" stroke="#7f927f" stroke-width="3" stroke-opacity="0.8" stroke-linecap="butt" stroke-linejoin="round"/>
<path d="M677.0 548.0 L712.8 527.7 L716.3 532.4 L727.0 537.2 L764.0 545.0 L756.9 553.9 L743.8 561.0 L691.3 561.0 L683.0 556.3Z" fill="none" stroke="#181818" stroke-width="1.2" stroke-dasharray="3 1.5" stroke-linecap="butt" stroke-linejoin="round"/>
<path d="M727.5 515.8 L734.1 511.1 L776.1 500.0 L802.5 503.9 L826.7 517.1 L819.0 524.8 L805.8 528.1 L748.6 524.8 L736.5 520.4Z" fill="none" stroke="#0f0" stroke-width="2.6" stroke-linecap="butt" stroke-linejoin="round"/>
<path d="M822.0 517.0 L815.0 524.0 L803.0 527.0 L751.0 524.0 L740.0 520.0" fill="none" stroke="#7f927f" stroke-width="3" stroke-opacity="0.8" stroke-linecap="butt" stroke-linejoin="round"/>
<path d="M731.8 515.8 L737.8 511.6 L776.0 501.5 L800.0 505.0 L822.0 517.0 L815.0 524.0 L803.0 527.0 L751.0 524.0 L740.0 520.0Z" fill="none" stroke="#181818" stroke-width="1.2" stroke-dasharray="3 1.5" stroke-linecap="butt" stroke-linejoin="round"/>
<path d="M786.6 503.8 L787.5 493.6 L804.9 496.4 L883.8 499.1 L869.2 505.5Z" fill="none" stroke="#0f0" stroke-width="2.6" stroke-linecap="butt" stroke-linejoin="round"/>
<path d="M806.9 496.7 L878.6 499.2 L865.3 505.0" fill="none" stroke="#7f927f" stroke-width="3" stroke-opacity="0.8" stroke-linecap="butt" stroke-linejoin="round"/>
<path d="M790.2 503.4 L791.0 494.2 L806.9 496.7 L878.6 499.2 L865.3 505.0Z" fill="none" stroke="#181818" stroke-width="1.2" stroke-dasharray="3 1.5" stroke-linecap="butt" stroke-linejoin="round"/>
<path d="M682 629.5 L750 596" stroke="#464646" stroke-width="2.6" fill="none"/>
<path d="M726 590.5 L809.5 559.5" stroke="#464646" stroke-width="2.6" fill="none"/>
<path d="M799.4 545.5 L876.5 525.5" stroke="#464646" stroke-width="2.6" fill="none"/>
<path d="M860 515.5 L931 498.5" stroke="#464646" stroke-width="2.6" fill="none"/>
<path d="M799.6 545 L800 554.5" stroke="#464646" stroke-width="2.6" fill="none"/>
<path d="M860 515 L860 524" stroke="#464646" stroke-width="2.6" fill="none"/>
<path d="M871.5 535 L871.5 552" stroke="#464646" stroke-width="3.6" fill="none"/>
<path d="M926.5 511 L926.5 528" stroke="#464646" stroke-width="3.6" fill="none"/>
<path d="M690.8 638 L694.2 654.5" stroke="#f00" stroke-width="3" fill="none"/>
<path d="M750.6 597 L753.8 615.5" stroke="#f00" stroke-width="3" fill="none"/>
<path d="M810.4 561 L812 580" stroke="#f00" stroke-width="3" fill="none"/>
<path d="M876 526 L875.2 553.5" stroke="#f00" stroke-width="3" fill="none"/>
<path d="M931 498.5 L930 529.5" stroke="#f00" stroke-width="3" fill="none"/>
<path d="M621 244.5 L621 474 L619.5 474 L619.5 632 Q620 641 635 641.5 Q650.5 641 651 632 L651 398 L652 398 L652 263 L653 263 L653 244.5Z" fill="url(#cyl)"/>
<ellipse cx="637" cy="244.3" rx="16" ry="8.6" fill="#d3d3d3"/>
<path d="M599 397 L565 417 L599 436" fill="none" stroke="#f00" stroke-width="1"/><text x="564.5" y="417" font-family="Liberation Sans,sans-serif" font-size="17" fill="#f00" textLength="26.1" lengthAdjust="spacingAndGlyphs">100</text>
<path d="M598 463.5 L564.5 482.5 L598 501" fill="none" stroke="#f8f" stroke-width="1"/><text x="564.5" y="482.5" font-family="Liberation Sans,sans-serif" font-size="17" fill="#f8f" textLength="17.4" lengthAdjust="spacingAndGlyphs">75</text>
<path d="M597 529.5 L563.5 548 L597 566" fill="none" stroke="#00f" stroke-width="1"/><text x="563.5" y="548" font-family="Liberation Sans,sans-serif" font-size="17" fill="#00f" textLength="17.4" lengthAdjust="spacingAndGlyphs">50</text>
</svg>
<div class="a" style="left:894px;top:172px;width:103px;height:21px;background:#fff;border:1px solid #abb0b8"></div>
<div class="a t" style="left:898px;top:176px;">几何体</div>
<svg style="left:808px;top:173px" width="15" height="20" viewBox="0 0 15 20"><path d="M1 3 Q1 1 3 1 L11.5 1 Q13 1 13 3 L13 17 L14.5 19 L3 19 Q1 19 1 17Z" fill="#1a6a9a" stroke="#0f4f7a" stroke-width=".6"/><circle cx="6.8" cy="4.6" r="1.4" fill="#fff"/><path d="M6.5 6.5 L4.2 9.5 M6.5 6.5 L9.5 8.2 L11 7.5 M6.5 6.5 L6.8 11 L4 15.5 M6.8 11 L9.5 13.2 L12.5 13.4" fill="none" stroke="#fff" stroke-width="1.3" stroke-linecap="round" stroke-linejoin="round"/></svg>
<svg style="left:834px;top:174px" width="17" height="17" viewBox="0 0 17 17"><g transform="rotate(-42 8.5 8.5)"><rect x="1" y="5.2" width="15.5" height="6.6" rx="1.5" fill="#f2f2f2" stroke="#b9b9b9" stroke-width=".5"/><path d="M2.5 5.2 h2.8 v6.6 h-2.8 a1.5 1.5 0 0 1 -1.5 -1.5 v-3.6 a1.5 1.5 0 0 1 1.5 -1.5Z" fill="#e8344a"/><path d="M11 5.2 h4 a1.5 1.5 0 0 1 1.5 1.5 v3.6 a1.5 1.5 0 0 1 -1.5 1.5 h-4Z" fill="#f4c21e"/><rect x="5.3" y="5.2" width="2" height="6.6" fill="#9a9a9a" opacity=".6"/></g></svg>
<svg style="left:857px;top:181px" width="6" height="4" viewBox="0 0 6 4"><path d="M0 0 h6 L3 3.4Z" fill="#3a3a3a"/></svg>
<svg style="left:870px;top:173px" width="20" height="19" viewBox="0 0 20 19"><rect x="1.2" y="7.6" width="3.3" height="11" fill="#e8242a"/><rect x="4.5" y="7.6" width="3.3" height="11" fill="#2aa83a"/><rect x="7.8" y="7.6" width="3.3" height="11" fill="#2a5fd0"/><path d="M10 1 h9 l-3.2 4.4 v3.6 l-2.6 1 v-4.6Z" fill="#1fb0e0" stroke="#1a90c0" stroke-width=".4"/></svg>
<svg style="left:985px;top:180px" width="7" height="4" viewBox="0 0 7 4"><path d="M0 0 h6.6 L3.3 3.6Z" fill="#3a3a3a"/></svg>
<svg style="left:1000px;top:173px" width="20" height="19" viewBox="0 0 20 19"><defs><linearGradient id="gCubeL" x1="0" y1="0" x2="1" y2="1"><stop offset="0" stop-color="#a8dcf6"/><stop offset="1" stop-color="#3a9ad6"/></linearGradient></defs><ellipse cx="10" cy="17.6" rx="7.5" ry="1.1" fill="#777" opacity=".4"/><path d="M1.2 5.2 L9 1 L19 3.8 L19 12.6 L10 17.6 L1.2 13.6Z" fill="#1f8ac4"/><path d="M1.2 5.2 L9 1 L19 3.8 L10 7.8Z" fill="#2aa0dc"/><path d="M1.2 5.2 L10 7.8 L10 17.6 L1.2 13.6Z" fill="url(#gCubeL)"/><path d="M10 7.8 L19 3.8 L19 12.6 L10 17.6Z" fill="#14699c"/></svg>
<svg style="left:1025px;top:181px" width="6" height="4" viewBox="0 0 6 4"><path d="M0 0 h6 L3 3.4Z" fill="#3a3a3a"/></svg>
<svg style="left:1038px;top:173px" width="20" height="19" viewBox="0 0 20 19"><ellipse cx="10" cy="17.6" rx="7.5" ry="1" fill="#777" opacity=".3"/><path d="M1.2 5.2 L9 1 L19 3.8 L19 12.6 L10 17.6 L1.2 13.6Z M1.2 5.2 L10 7.8 L19 3.8 M10 7.8 L10 17.6" fill="#fff" stroke="#5aa6d0" stroke-width=".8" stroke-linejoin="round"/></svg>
<svg style="left:1063px;top:181px" width="6" height="4" viewBox="0 0 6 4"><path d="M0 0 h6 L3 3.4Z" fill="#3a3a3a"/></svg>
<svg style="left:1076px;top:173px" width="20" height="19" viewBox="0 0 20 19"><path d="M3.5 3.5 L11.5 1.2 L18.6 6.4 L17.2 14.6 L8.8 17.6 L1.4 11Z" fill="#fbb81c" stroke="#d8442a" stroke-width="1"/><path d="M3.5 3.5 L17.2 14.6 M11.5 1.2 L8.8 17.6 M18.6 6.4 L1.4 11" stroke="#d8442a" stroke-width=".9" fill="none"/><path d="M10 9.2 L11.5 1.2 L18.6 6.4Z" fill="#ffd84a" opacity=".6"/></svg>
<svg style="left:1101px;top:181px" width="6" height="4" viewBox="0 0 6 4"><path d="M0 0 h6 L3 3.4Z" fill="#3a3a3a"/></svg>
<svg style="left:1114px;top:173px" width="20" height="19" viewBox="0 0 20 19"><rect x="1.2" y="1.2" width="17" height="16.6" fill="#d4eaf6" stroke="#2aa0d8" stroke-width="1.3"/><circle cx="9.8" cy="9.4" r="6.6" fill="#ffd83a" stroke="#b9a98a" stroke-width="1.1"/><path d="M7.5 6 h3.2 l1.6 1.6 v5.2 h-4.8Z" fill="#eef2f6" stroke="#9ab0c4" stroke-width=".6"/><path d="M15 14.6 l3.4 3.2" stroke="#2a7ab0" stroke-width="1.6"/></svg>
<svg style="left:1139px;top:181px" width="6" height="4" viewBox="0 0 6 4"><path d="M0 0 h6 L3 3.4Z" fill="#3a3a3a"/></svg>
<svg style="left:1153px;top:173px" width="18" height="20" viewBox="0 0 18 20"><path d="M3 1.5 V14.5 M15 1.5 V14.5" stroke="#2a9ac8" stroke-width="1.6" fill="none"/><path d="M5.4 6.8 H12.6 M5 6.8 l2 -1.5 v3z M13 6.8 l-2 -1.5 v3z" stroke="#4ab4dc" stroke-width="1" fill="#4ab4dc"/><path d="M3.5 17.2 H14.5 M2.6 17.2 l2 -1.3 v2.6z M15.4 17.2 l-2 -1.3 v2.6z" stroke="#d8343a" stroke-width="1" fill="#d8343a"/></svg>
<svg style="left:1177px;top:181px" width="6" height="4" viewBox="0 0 6 4"><path d="M0 0 h6 L3 3.4Z" fill="#3a3a3a"/></svg>
<div class="a" style="left:0;top:981px;width:1679px;height:26px;background:#e3e6ea;border-top:1px solid #c3c7cd"></div>
<div class="a t" style="left:5px;top:989px;">选择新命令.</div>
<div class="a" style="left:1263px;top:984px;width:1px;height:23px;background:#8d939b"></div>
<div class="a" style="left:1271px;top:985px;width:23px;height:23px;background:#fbdc7e;border:1px solid #e6b542"></div>
<svg style="left:1275px;top:989px" width="16" height="14" viewBox="0 0 16 14"><rect x=".6" y=".6" width="13.8" height="12.8" fill="#eaf1fb" stroke="#3a6ac0" stroke-width=".9"/><rect x="1" y="1" width="13" height="2.6" fill="#5a8ad8"/><path d="M2.8 5.5 v1 M2.8 8 v1 M2.8 10.5 v1" stroke="#3a6ac0" stroke-width="1.2"/><path d="M6 5 h6 v2.2 h-2 v5.6 h-2.2 v-5.6 h-1.8Z" fill="#d8242a" stroke="#7a1414" stroke-width=".5"/></svg>
<svg style="left:1304px;top:989px" width="15" height="14" viewBox="0 0 15 14"><rect x=".6" y=".6" width="13.6" height="12.8" fill="#e4ecfa" stroke="#4a78c8" stroke-width=".9"/><rect x="1" y="1" width="12.8" height="2.6" fill="#6a98e0"/><path d="M2.6 6 h9.6 M2.6 8.4 h9.6 M2.6 10.8 h9.6" stroke="#5a6a8a" stroke-width=".9" fill="none"/></svg>
<div class="a" style="left:1329px;top:985px;width:349px;height:24px;background:#fff;border:1px solid #b3b8c0"></div>
<svg style="left:1590px;top:978px" width="84" height="14" viewBox="0 0 84 14"><path d="M2 4 h10 v3 h-10z M16 4 h8 v3 h-8z M28 4 h12 v3 h-12z M44 5 h6 v3 h-6z M54 4 h5 v4 h-5z M62 3 h4 v5 h-4z M70 5 l6 -3 v3z" fill="#fff" opacity=".9"/></svg>
</body></html>
